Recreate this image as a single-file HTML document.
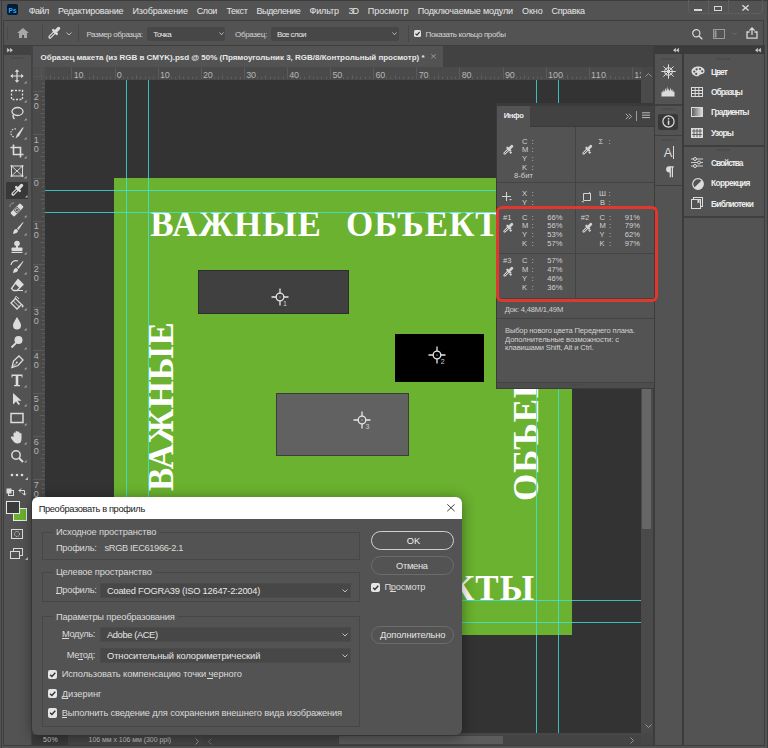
<!DOCTYPE html>
<html><head><meta charset="utf-8">
<style>
*{margin:0;padding:0;box-sizing:border-box}
html,body{width:768px;height:748px;overflow:hidden;background:#3a3a3a;font-family:"Liberation Sans",sans-serif;position:relative}
.a{position:absolute}
.t{position:absolute;white-space:nowrap;line-height:1}
svg{overflow:visible}
</style></head><body>
<div class="a" style="left:0px;top:0px;width:768px;height:748px;background:#535353;"></div>
<div class="a" style="left:0px;top:0px;width:768px;height:1px;background:#3d3d3d;"></div>
<div class="a" style="left:1px;top:0px;width:1px;height:748px;background:#3d3d3d;"></div>
<div class="a" style="left:767px;top:0px;width:1px;height:748px;background:#3d3d3d;"></div>
<div class="a" style="left:3px;top:45px;width:762px;height:701px;background:#3e3e3e;"></div>
<div class="a" style="left:3px;top:20px;width:761px;height:26px;background:#3e3e3e;"></div>
<div class="a" style="left:4px;top:21px;width:759px;height:24px;background:#535353;"></div>
<div class="a" style="left:4px;top:46px;width:27px;height:699px;background:#535353;"></div>
<div class="a" style="left:4px;top:46px;width:27px;height:9px;background:#424242;"></div>
<div class="a" style="left:31px;top:46px;width:622.5px;height:21px;background:#424242;"></div>
<div class="a" style="left:32px;top:46px;width:411px;height:21px;background:#535353;"></div>
<div class="a" style="left:32px;top:67px;width:609px;height:13px;background:#4a4a4a;"></div>
<div class="a" style="left:32px;top:67px;width:13px;height:666px;background:#4a4a4a;"></div>
<div class="a" style="left:45px;top:80px;width:596px;height:653px;background:#333333;"></div>
<div class="a" style="left:641px;top:67px;width:13px;height:666px;background:#4a4a4a;"></div>
<div class="a" style="left:32px;top:733px;width:622px;height:12px;background:#474747;"></div>
<div class="a" style="left:655px;top:46px;width:109px;height:8px;background:#3b3b3b;"></div>
<div class="a" style="left:655px;top:54px;width:27px;height:691px;background:#535353;"></div>
<div class="a" style="left:684px;top:54px;width:80px;height:691px;background:#535353;"></div>
<div class="a" style="left:7px;top:4px;width:11px;height:11px;background:#001e36;border-radius:2px"></div>
<div class="t" style="left:8.60px;top:8.00px;font-size:6.5px;color:#31a8ff;font-weight:bold;font-family:'Liberation Sans',sans-serif;">Ps</div>
<div class="t" style="left:28.70px;top:7.00px;font-size:9px;color:#e6e6e6;font-weight:normal;font-family:'Liberation Sans',sans-serif;letter-spacing:-0.513px;">Файл</div>
<div class="t" style="left:58.00px;top:7.00px;font-size:9px;color:#e6e6e6;font-weight:normal;font-family:'Liberation Sans',sans-serif;letter-spacing:-0.229px;">Редактирование</div>
<div class="t" style="left:132.50px;top:7.00px;font-size:9px;color:#e6e6e6;font-weight:normal;font-family:'Liberation Sans',sans-serif;letter-spacing:-0.120px;">Изображение</div>
<div class="t" style="left:196.80px;top:7.00px;font-size:9px;color:#e6e6e6;font-weight:normal;font-family:'Liberation Sans',sans-serif;letter-spacing:-0.457px;">Слои</div>
<div class="t" style="left:226.40px;top:7.00px;font-size:9px;color:#e6e6e6;font-weight:normal;font-family:'Liberation Sans',sans-serif;letter-spacing:-0.270px;">Текст</div>
<div class="t" style="left:256.40px;top:7.00px;font-size:9px;color:#e6e6e6;font-weight:normal;font-family:'Liberation Sans',sans-serif;letter-spacing:-0.425px;">Выделение</div>
<div class="t" style="left:309.50px;top:7.00px;font-size:9px;color:#e6e6e6;font-weight:normal;font-family:'Liberation Sans',sans-serif;letter-spacing:-0.148px;">Фильтр</div>
<div class="t" style="left:348.50px;top:7.00px;font-size:9px;color:#e6e6e6;font-weight:normal;font-family:'Liberation Sans',sans-serif;letter-spacing:-1.020px;">3D</div>
<div class="t" style="left:367.80px;top:7.00px;font-size:9px;color:#e6e6e6;font-weight:normal;font-family:'Liberation Sans',sans-serif;letter-spacing:-0.069px;">Просмотр</div>
<div class="t" style="left:417.80px;top:7.00px;font-size:9px;color:#e6e6e6;font-weight:normal;font-family:'Liberation Sans',sans-serif;letter-spacing:-0.153px;">Подключаемые модули</div>
<div class="t" style="left:521.90px;top:7.00px;font-size:9px;color:#e6e6e6;font-weight:normal;font-family:'Liberation Sans',sans-serif;letter-spacing:-0.008px;">Окно</div>
<div class="t" style="left:551.60px;top:7.00px;font-size:9px;color:#e6e6e6;font-weight:normal;font-family:'Liberation Sans',sans-serif;letter-spacing:-0.321px;">Справка</div>
<div class="a" style="left:688px;top:-2px;width:75px;height:16px;border:1px solid #5e5e5e;border-radius:0 0 4px 4px"></div>
<div class="a" style="left:708px;top:0px;width:1px;height:14px;background:#5e5e5e;"></div>
<div class="a" style="left:728px;top:0px;width:1px;height:14px;background:#5e5e5e;"></div>
<div class="a" style="left:693.8px;top:9.2px;width:8px;height:1.8px;background:#d8d8d8;"></div>
<div class="a" style="left:714.4px;top:5.7px;width:7.6px;height:5px;border:1.5px solid #d8d8d8"></div>
<svg class="a" style="left:741.8px;top:4.5px;" width="7" height="5.8" viewBox="0 0 7 5.8"><path d="M0.4 0.3L6.6 5.5M6.6 0.3L0.4 5.5" stroke="#d8d8d8" stroke-width="1.45"/></svg>
<div class="a" style="left:7px;top:26px;width:1px;height:14px;background:#4a4a4a;"></div>
<svg class="a" style="left:17px;top:28px;" width="12" height="10" viewBox="0 0 12 10"><path d="M6 0L0 5H2V10H5V7H7V10H10V5H12Z" fill="#a6a6a6"/></svg>
<div class="a" style="left:42px;top:25px;width:1px;height:16px;background:#474747;"></div>
<svg class="a" style="left:48px;top:27px;" width="12" height="12" viewBox="0 0 12 12"><g transform="scale(1.0000)"><path d="M8.2 3.8L10.6 1.4" stroke="#dcdcdc" stroke-width="3.3" stroke-linecap="round"/><path d="M5.2 3.2L8.8 6.8" stroke="#dcdcdc" stroke-width="2.5" stroke-linecap="round"/><path d="M6.6 5.4L2.0 10.0" stroke="#dcdcdc" stroke-width="3.2" stroke-linecap="round"/><path d="M5.6 6.4L2.3 9.7" stroke="#535353" stroke-width="1.1" stroke-linecap="round"/></g></svg>
<svg class="a" style="left:66px;top:32px;" width="6" height="4" viewBox="0 0 6 4"><path d="M0.5 0.5L3 3L5.5 0.5" fill="none" stroke="#bdbdbd" stroke-width="1"/></svg>
<div class="a" style="left:77.5px;top:25px;width:1px;height:17px;background:#474747;"></div>
<div class="t" style="left:86.40px;top:31.00px;font-size:8px;color:#d4d4d4;font-weight:normal;font-family:'Liberation Sans',sans-serif;letter-spacing:-0.420px;">Размер образца:</div>
<div class="a" style="left:147px;top:26.5px;width:78px;height:14.5px;background:#474747;border-radius:2px"></div>
<div class="t" style="left:153.30px;top:31.00px;font-size:8px;color:#e8e8e8;font-weight:normal;font-family:'Liberation Sans',sans-serif;letter-spacing:-0.635px;">Точка</div>
<svg class="a" style="left:219px;top:32px;" width="5" height="4" viewBox="0 0 5 4"><path d="M0.5 0.5L2.5 2.7L4.5 0.5" fill="none" stroke="#c8c8c8" stroke-width="0.9"/></svg>
<div class="t" style="left:235.00px;top:31.00px;font-size:8px;color:#d4d4d4;font-weight:normal;font-family:'Liberation Sans',sans-serif;letter-spacing:-0.334px;">Образец:</div>
<div class="a" style="left:270.7px;top:26.5px;width:128.5px;height:14.5px;background:#474747;border-radius:2px"></div>
<div class="t" style="left:276.90px;top:31.00px;font-size:8px;color:#e8e8e8;font-weight:normal;font-family:'Liberation Sans',sans-serif;letter-spacing:-0.569px;">Все слои</div>
<svg class="a" style="left:392.3px;top:32px;" width="5" height="4" viewBox="0 0 5 4"><path d="M0.5 0.5L2.5 2.7L4.5 0.5" fill="none" stroke="#c8c8c8" stroke-width="0.9"/></svg>
<div class="a" style="left:407.5px;top:25px;width:1px;height:17px;background:#474747;"></div>
<div class="a" style="left:414px;top:29.7px;width:7px;height:7px;background:#e0e0e0;border-radius:1.5px"></div>
<svg class="a" style="left:414px;top:29.7px;" width="7" height="7" viewBox="0 0 7 7"><path d="M1.5 3.6L3 5.1L5.6 1.8" fill="none" stroke="#333" stroke-width="1.2"/></svg>
<div class="t" style="left:425.50px;top:31.00px;font-size:8px;color:#d4d4d4;font-weight:normal;font-family:'Liberation Sans',sans-serif;letter-spacing:-0.357px;">Показать кольцо пробы</div>
<svg class="a" style="left:692px;top:29px;" width="11" height="11" viewBox="0 0 11 11"><circle cx="4.3" cy="4.3" r="3.6" fill="none" stroke="#d8d8d8" stroke-width="1.2"/><path d="M7 7L10.3 10.3" stroke="#d8d8d8" stroke-width="1.4"/></svg>
<svg class="a" style="left:713px;top:29px;" width="12" height="10" viewBox="0 0 12 10"><rect x="0.5" y="0.5" width="11" height="9" fill="none" stroke="#9a9a9a"/><rect x="1.5" y="1.5" width="2" height="7" fill="#9a9a9a"/></svg>
<svg class="a" style="left:732px;top:32px;" width="5" height="4" viewBox="0 0 5 4"><path d="M0.5 0.5L2.5 2.7L4.5 0.5" fill="none" stroke="#6e6e6e" stroke-width="0.9"/></svg>
<svg class="a" style="left:746px;top:27px;" width="12" height="12" viewBox="0 0 12 12"><path d="M6 1V8M3.3 3.6L6 0.9L8.7 3.6M3.5 5H1V11.2H11V5H8.5" fill="none" stroke="#d8d8d8" stroke-width="1.3"/></svg>
<div class="t" style="left:40.60px;top:54.00px;font-size:8px;color:#e8e8e8;font-weight:bold;font-family:'Liberation Sans',sans-serif;letter-spacing:-0.010px;">Образец макета (из RGB в CMYK).psd @ 50% (Прямоугольник 3, RGB/8/Контрольный просмотр) *</div>
<svg class="a" style="left:431px;top:54.3px;" width="5" height="4.6" viewBox="0 0 5 4.6"><path d="M0.3 0.3L4.7 4.3M4.7 0.3L0.3 4.3" stroke="#a8a8a8" stroke-width="0.8"/></svg>
<svg class="a" style="left:32px;top:67px;overflow:hidden" width="609" height="13" viewBox="0 0 609 13"><line x1="14.50" y1="9.7" x2="14.50" y2="12" stroke="#5f5f5f" stroke-width="1"/><line x1="18.50" y1="8.2" x2="18.50" y2="12" stroke="#5f5f5f" stroke-width="1"/><line x1="22.50" y1="9.7" x2="22.50" y2="12" stroke="#5f5f5f" stroke-width="1"/><line x1="26.50" y1="9.7" x2="26.50" y2="12" stroke="#5f5f5f" stroke-width="1"/><line x1="31.50" y1="9.7" x2="31.50" y2="12" stroke="#5f5f5f" stroke-width="1"/><line x1="35.50" y1="9.7" x2="35.50" y2="12" stroke="#5f5f5f" stroke-width="1"/><line x1="39.50" y1="0.3" x2="39.50" y2="12" stroke="#5a5a5a" stroke-width="1"/><line x1="44.50" y1="9.7" x2="44.50" y2="12" stroke="#5f5f5f" stroke-width="1"/><line x1="48.50" y1="9.7" x2="48.50" y2="12" stroke="#5f5f5f" stroke-width="1"/><line x1="52.50" y1="9.7" x2="52.50" y2="12" stroke="#5f5f5f" stroke-width="1"/><line x1="57.50" y1="9.7" x2="57.50" y2="12" stroke="#5f5f5f" stroke-width="1"/><line x1="61.50" y1="8.2" x2="61.50" y2="12" stroke="#5f5f5f" stroke-width="1"/><line x1="65.50" y1="9.7" x2="65.50" y2="12" stroke="#5f5f5f" stroke-width="1"/><line x1="70.50" y1="9.7" x2="70.50" y2="12" stroke="#5f5f5f" stroke-width="1"/><line x1="74.50" y1="9.7" x2="74.50" y2="12" stroke="#5f5f5f" stroke-width="1"/><line x1="78.50" y1="9.7" x2="78.50" y2="12" stroke="#5f5f5f" stroke-width="1"/><line x1="83.50" y1="0.3" x2="83.50" y2="12" stroke="#5a5a5a" stroke-width="1"/><line x1="87.50" y1="9.7" x2="87.50" y2="12" stroke="#5f5f5f" stroke-width="1"/><line x1="91.50" y1="9.7" x2="91.50" y2="12" stroke="#5f5f5f" stroke-width="1"/><line x1="95.50" y1="9.7" x2="95.50" y2="12" stroke="#5f5f5f" stroke-width="1"/><line x1="100.50" y1="9.7" x2="100.50" y2="12" stroke="#5f5f5f" stroke-width="1"/><line x1="104.50" y1="8.2" x2="104.50" y2="12" stroke="#5f5f5f" stroke-width="1"/><line x1="108.50" y1="9.7" x2="108.50" y2="12" stroke="#5f5f5f" stroke-width="1"/><line x1="113.50" y1="9.7" x2="113.50" y2="12" stroke="#5f5f5f" stroke-width="1"/><line x1="117.50" y1="9.7" x2="117.50" y2="12" stroke="#5f5f5f" stroke-width="1"/><line x1="121.50" y1="9.7" x2="121.50" y2="12" stroke="#5f5f5f" stroke-width="1"/><line x1="126.50" y1="0.3" x2="126.50" y2="12" stroke="#5a5a5a" stroke-width="1"/><line x1="130.50" y1="9.7" x2="130.50" y2="12" stroke="#5f5f5f" stroke-width="1"/><line x1="134.50" y1="9.7" x2="134.50" y2="12" stroke="#5f5f5f" stroke-width="1"/><line x1="139.50" y1="9.7" x2="139.50" y2="12" stroke="#5f5f5f" stroke-width="1"/><line x1="143.50" y1="9.7" x2="143.50" y2="12" stroke="#5f5f5f" stroke-width="1"/><line x1="147.50" y1="8.2" x2="147.50" y2="12" stroke="#5f5f5f" stroke-width="1"/><line x1="151.50" y1="9.7" x2="151.50" y2="12" stroke="#5f5f5f" stroke-width="1"/><line x1="156.50" y1="9.7" x2="156.50" y2="12" stroke="#5f5f5f" stroke-width="1"/><line x1="160.50" y1="9.7" x2="160.50" y2="12" stroke="#5f5f5f" stroke-width="1"/><line x1="164.50" y1="9.7" x2="164.50" y2="12" stroke="#5f5f5f" stroke-width="1"/><line x1="169.50" y1="0.3" x2="169.50" y2="12" stroke="#5a5a5a" stroke-width="1"/><line x1="173.50" y1="9.7" x2="173.50" y2="12" stroke="#5f5f5f" stroke-width="1"/><line x1="177.50" y1="9.7" x2="177.50" y2="12" stroke="#5f5f5f" stroke-width="1"/><line x1="182.50" y1="9.7" x2="182.50" y2="12" stroke="#5f5f5f" stroke-width="1"/><line x1="186.50" y1="9.7" x2="186.50" y2="12" stroke="#5f5f5f" stroke-width="1"/><line x1="190.50" y1="8.2" x2="190.50" y2="12" stroke="#5f5f5f" stroke-width="1"/><line x1="195.50" y1="9.7" x2="195.50" y2="12" stroke="#5f5f5f" stroke-width="1"/><line x1="199.50" y1="9.7" x2="199.50" y2="12" stroke="#5f5f5f" stroke-width="1"/><line x1="203.50" y1="9.7" x2="203.50" y2="12" stroke="#5f5f5f" stroke-width="1"/><line x1="208.50" y1="9.7" x2="208.50" y2="12" stroke="#5f5f5f" stroke-width="1"/><line x1="212.50" y1="0.3" x2="212.50" y2="12" stroke="#5a5a5a" stroke-width="1"/><line x1="216.50" y1="9.7" x2="216.50" y2="12" stroke="#5f5f5f" stroke-width="1"/><line x1="220.50" y1="9.7" x2="220.50" y2="12" stroke="#5f5f5f" stroke-width="1"/><line x1="225.50" y1="9.7" x2="225.50" y2="12" stroke="#5f5f5f" stroke-width="1"/><line x1="229.50" y1="9.7" x2="229.50" y2="12" stroke="#5f5f5f" stroke-width="1"/><line x1="233.50" y1="8.2" x2="233.50" y2="12" stroke="#5f5f5f" stroke-width="1"/><line x1="238.50" y1="9.7" x2="238.50" y2="12" stroke="#5f5f5f" stroke-width="1"/><line x1="242.50" y1="9.7" x2="242.50" y2="12" stroke="#5f5f5f" stroke-width="1"/><line x1="246.50" y1="9.7" x2="246.50" y2="12" stroke="#5f5f5f" stroke-width="1"/><line x1="251.50" y1="9.7" x2="251.50" y2="12" stroke="#5f5f5f" stroke-width="1"/><line x1="255.50" y1="0.3" x2="255.50" y2="12" stroke="#5a5a5a" stroke-width="1"/><line x1="259.50" y1="9.7" x2="259.50" y2="12" stroke="#5f5f5f" stroke-width="1"/><line x1="264.50" y1="9.7" x2="264.50" y2="12" stroke="#5f5f5f" stroke-width="1"/><line x1="268.50" y1="9.7" x2="268.50" y2="12" stroke="#5f5f5f" stroke-width="1"/><line x1="272.50" y1="9.7" x2="272.50" y2="12" stroke="#5f5f5f" stroke-width="1"/><line x1="277.50" y1="8.2" x2="277.50" y2="12" stroke="#5f5f5f" stroke-width="1"/><line x1="281.50" y1="9.7" x2="281.50" y2="12" stroke="#5f5f5f" stroke-width="1"/><line x1="285.50" y1="9.7" x2="285.50" y2="12" stroke="#5f5f5f" stroke-width="1"/><line x1="289.50" y1="9.7" x2="289.50" y2="12" stroke="#5f5f5f" stroke-width="1"/><line x1="294.50" y1="9.7" x2="294.50" y2="12" stroke="#5f5f5f" stroke-width="1"/><line x1="298.50" y1="0.3" x2="298.50" y2="12" stroke="#5a5a5a" stroke-width="1"/><line x1="302.50" y1="9.7" x2="302.50" y2="12" stroke="#5f5f5f" stroke-width="1"/><line x1="307.50" y1="9.7" x2="307.50" y2="12" stroke="#5f5f5f" stroke-width="1"/><line x1="311.50" y1="9.7" x2="311.50" y2="12" stroke="#5f5f5f" stroke-width="1"/><line x1="315.50" y1="9.7" x2="315.50" y2="12" stroke="#5f5f5f" stroke-width="1"/><line x1="320.50" y1="8.2" x2="320.50" y2="12" stroke="#5f5f5f" stroke-width="1"/><line x1="324.50" y1="9.7" x2="324.50" y2="12" stroke="#5f5f5f" stroke-width="1"/><line x1="328.50" y1="9.7" x2="328.50" y2="12" stroke="#5f5f5f" stroke-width="1"/><line x1="333.50" y1="9.7" x2="333.50" y2="12" stroke="#5f5f5f" stroke-width="1"/><line x1="337.50" y1="9.7" x2="337.50" y2="12" stroke="#5f5f5f" stroke-width="1"/><line x1="341.50" y1="0.3" x2="341.50" y2="12" stroke="#5a5a5a" stroke-width="1"/><line x1="346.50" y1="9.7" x2="346.50" y2="12" stroke="#5f5f5f" stroke-width="1"/><line x1="350.50" y1="9.7" x2="350.50" y2="12" stroke="#5f5f5f" stroke-width="1"/><line x1="354.50" y1="9.7" x2="354.50" y2="12" stroke="#5f5f5f" stroke-width="1"/><line x1="358.50" y1="9.7" x2="358.50" y2="12" stroke="#5f5f5f" stroke-width="1"/><line x1="363.50" y1="8.2" x2="363.50" y2="12" stroke="#5f5f5f" stroke-width="1"/><line x1="367.50" y1="9.7" x2="367.50" y2="12" stroke="#5f5f5f" stroke-width="1"/><line x1="371.50" y1="9.7" x2="371.50" y2="12" stroke="#5f5f5f" stroke-width="1"/><line x1="376.50" y1="9.7" x2="376.50" y2="12" stroke="#5f5f5f" stroke-width="1"/><line x1="380.50" y1="9.7" x2="380.50" y2="12" stroke="#5f5f5f" stroke-width="1"/><line x1="384.50" y1="0.3" x2="384.50" y2="12" stroke="#5a5a5a" stroke-width="1"/><line x1="389.50" y1="9.7" x2="389.50" y2="12" stroke="#5f5f5f" stroke-width="1"/><line x1="393.50" y1="9.7" x2="393.50" y2="12" stroke="#5f5f5f" stroke-width="1"/><line x1="397.50" y1="9.7" x2="397.50" y2="12" stroke="#5f5f5f" stroke-width="1"/><line x1="402.50" y1="9.7" x2="402.50" y2="12" stroke="#5f5f5f" stroke-width="1"/><line x1="406.50" y1="8.2" x2="406.50" y2="12" stroke="#5f5f5f" stroke-width="1"/><line x1="410.50" y1="9.7" x2="410.50" y2="12" stroke="#5f5f5f" stroke-width="1"/><line x1="415.50" y1="9.7" x2="415.50" y2="12" stroke="#5f5f5f" stroke-width="1"/><line x1="419.50" y1="9.7" x2="419.50" y2="12" stroke="#5f5f5f" stroke-width="1"/><line x1="423.50" y1="9.7" x2="423.50" y2="12" stroke="#5f5f5f" stroke-width="1"/><line x1="427.50" y1="0.3" x2="427.50" y2="12" stroke="#5a5a5a" stroke-width="1"/><line x1="432.50" y1="9.7" x2="432.50" y2="12" stroke="#5f5f5f" stroke-width="1"/><line x1="436.50" y1="9.7" x2="436.50" y2="12" stroke="#5f5f5f" stroke-width="1"/><line x1="440.50" y1="9.7" x2="440.50" y2="12" stroke="#5f5f5f" stroke-width="1"/><line x1="445.50" y1="9.7" x2="445.50" y2="12" stroke="#5f5f5f" stroke-width="1"/><line x1="449.50" y1="8.2" x2="449.50" y2="12" stroke="#5f5f5f" stroke-width="1"/><line x1="453.50" y1="9.7" x2="453.50" y2="12" stroke="#5f5f5f" stroke-width="1"/><line x1="458.50" y1="9.7" x2="458.50" y2="12" stroke="#5f5f5f" stroke-width="1"/><line x1="462.50" y1="9.7" x2="462.50" y2="12" stroke="#5f5f5f" stroke-width="1"/><line x1="466.50" y1="9.7" x2="466.50" y2="12" stroke="#5f5f5f" stroke-width="1"/><line x1="471.50" y1="0.3" x2="471.50" y2="12" stroke="#5a5a5a" stroke-width="1"/><line x1="475.50" y1="9.7" x2="475.50" y2="12" stroke="#5f5f5f" stroke-width="1"/><line x1="479.50" y1="9.7" x2="479.50" y2="12" stroke="#5f5f5f" stroke-width="1"/><line x1="484.50" y1="9.7" x2="484.50" y2="12" stroke="#5f5f5f" stroke-width="1"/><line x1="488.50" y1="9.7" x2="488.50" y2="12" stroke="#5f5f5f" stroke-width="1"/><line x1="492.50" y1="8.2" x2="492.50" y2="12" stroke="#5f5f5f" stroke-width="1"/><line x1="496.50" y1="9.7" x2="496.50" y2="12" stroke="#5f5f5f" stroke-width="1"/><line x1="501.50" y1="9.7" x2="501.50" y2="12" stroke="#5f5f5f" stroke-width="1"/><line x1="505.50" y1="9.7" x2="505.50" y2="12" stroke="#5f5f5f" stroke-width="1"/><line x1="509.50" y1="9.7" x2="509.50" y2="12" stroke="#5f5f5f" stroke-width="1"/><line x1="514.50" y1="0.3" x2="514.50" y2="12" stroke="#5a5a5a" stroke-width="1"/><line x1="518.50" y1="9.7" x2="518.50" y2="12" stroke="#5f5f5f" stroke-width="1"/><line x1="522.50" y1="9.7" x2="522.50" y2="12" stroke="#5f5f5f" stroke-width="1"/><line x1="527.50" y1="9.7" x2="527.50" y2="12" stroke="#5f5f5f" stroke-width="1"/><line x1="531.50" y1="9.7" x2="531.50" y2="12" stroke="#5f5f5f" stroke-width="1"/><line x1="535.50" y1="8.2" x2="535.50" y2="12" stroke="#5f5f5f" stroke-width="1"/><line x1="540.50" y1="9.7" x2="540.50" y2="12" stroke="#5f5f5f" stroke-width="1"/><line x1="544.50" y1="9.7" x2="544.50" y2="12" stroke="#5f5f5f" stroke-width="1"/><line x1="548.50" y1="9.7" x2="548.50" y2="12" stroke="#5f5f5f" stroke-width="1"/><line x1="553.50" y1="9.7" x2="553.50" y2="12" stroke="#5f5f5f" stroke-width="1"/><line x1="557.50" y1="0.3" x2="557.50" y2="12" stroke="#5a5a5a" stroke-width="1"/><line x1="561.50" y1="9.7" x2="561.50" y2="12" stroke="#5f5f5f" stroke-width="1"/><line x1="565.50" y1="9.7" x2="565.50" y2="12" stroke="#5f5f5f" stroke-width="1"/><line x1="570.50" y1="9.7" x2="570.50" y2="12" stroke="#5f5f5f" stroke-width="1"/><line x1="574.50" y1="9.7" x2="574.50" y2="12" stroke="#5f5f5f" stroke-width="1"/><line x1="578.50" y1="8.2" x2="578.50" y2="12" stroke="#5f5f5f" stroke-width="1"/><line x1="583.50" y1="9.7" x2="583.50" y2="12" stroke="#5f5f5f" stroke-width="1"/><line x1="587.50" y1="9.7" x2="587.50" y2="12" stroke="#5f5f5f" stroke-width="1"/><line x1="591.50" y1="9.7" x2="591.50" y2="12" stroke="#5f5f5f" stroke-width="1"/><line x1="596.50" y1="9.7" x2="596.50" y2="12" stroke="#5f5f5f" stroke-width="1"/><line x1="600.50" y1="0.3" x2="600.50" y2="12" stroke="#5a5a5a" stroke-width="1"/><line x1="604.50" y1="9.7" x2="604.50" y2="12" stroke="#5f5f5f" stroke-width="1"/></svg>
<div class="a" style="left:0;top:0;width:641px;height:80px;overflow:hidden">
<div class="t" style="left:73.68px;top:71.00px;font-size:9px;color:#b4b4b4;font-weight:normal;font-family:'Liberation Sans',sans-serif;letter-spacing:-0.190px;">10</div>
<div class="t" style="left:116.80px;top:71.00px;font-size:9px;color:#b4b4b4;font-weight:normal;font-family:'Liberation Sans',sans-serif;">0</div>
<div class="t" style="left:159.92px;top:71.00px;font-size:9px;color:#b4b4b4;font-weight:normal;font-family:'Liberation Sans',sans-serif;letter-spacing:-0.190px;">10</div>
<div class="t" style="left:203.04px;top:71.00px;font-size:9px;color:#b4b4b4;font-weight:normal;font-family:'Liberation Sans',sans-serif;letter-spacing:-0.190px;">20</div>
<div class="t" style="left:246.16px;top:71.00px;font-size:9px;color:#b4b4b4;font-weight:normal;font-family:'Liberation Sans',sans-serif;letter-spacing:-0.190px;">30</div>
<div class="t" style="left:289.28px;top:71.00px;font-size:9px;color:#b4b4b4;font-weight:normal;font-family:'Liberation Sans',sans-serif;letter-spacing:-0.190px;">40</div>
<div class="t" style="left:332.40px;top:71.00px;font-size:9px;color:#b4b4b4;font-weight:normal;font-family:'Liberation Sans',sans-serif;letter-spacing:-0.190px;">50</div>
<div class="t" style="left:375.52px;top:71.00px;font-size:9px;color:#b4b4b4;font-weight:normal;font-family:'Liberation Sans',sans-serif;letter-spacing:-0.190px;">60</div>
<div class="t" style="left:418.64px;top:71.00px;font-size:9px;color:#b4b4b4;font-weight:normal;font-family:'Liberation Sans',sans-serif;letter-spacing:-0.190px;">70</div>
<div class="t" style="left:461.76px;top:71.00px;font-size:9px;color:#b4b4b4;font-weight:normal;font-family:'Liberation Sans',sans-serif;letter-spacing:-0.190px;">80</div>
<div class="t" style="left:504.88px;top:71.00px;font-size:9px;color:#b4b4b4;font-weight:normal;font-family:'Liberation Sans',sans-serif;letter-spacing:-0.190px;">90</div>
<div class="t" style="left:548.00px;top:71.00px;font-size:9px;color:#b4b4b4;font-weight:normal;font-family:'Liberation Sans',sans-serif;letter-spacing:-0.015px;">100</div>
<div class="t" style="left:591.12px;top:71.00px;font-size:9px;color:#b4b4b4;font-weight:normal;font-family:'Liberation Sans',sans-serif;letter-spacing:0.322px;">110</div>
<div class="t" style="left:634.24px;top:71.00px;font-size:9px;color:#b4b4b4;font-weight:normal;font-family:'Liberation Sans',sans-serif;letter-spacing:-0.015px;">120</div>
</div>
<svg class="a" style="left:32px;top:67px;overflow:hidden" width="13" height="666" viewBox="0 0 13 666"><line x1="10" y1="16.50" x2="12.5" y2="16.50" stroke="#5f5f5f" stroke-width="1"/><line x1="10" y1="20.50" x2="12.5" y2="20.50" stroke="#5f5f5f" stroke-width="1"/><line x1="1" y1="24.50" x2="12.5" y2="24.50" stroke="#5a5a5a" stroke-width="1"/><line x1="10" y1="29.50" x2="12.5" y2="29.50" stroke="#5f5f5f" stroke-width="1"/><line x1="10" y1="33.50" x2="12.5" y2="33.50" stroke="#5f5f5f" stroke-width="1"/><line x1="10" y1="37.50" x2="12.5" y2="37.50" stroke="#5f5f5f" stroke-width="1"/><line x1="10" y1="42.50" x2="12.5" y2="42.50" stroke="#5f5f5f" stroke-width="1"/><line x1="8.5" y1="46.50" x2="12.5" y2="46.50" stroke="#5f5f5f" stroke-width="1"/><line x1="10" y1="50.50" x2="12.5" y2="50.50" stroke="#5f5f5f" stroke-width="1"/><line x1="10" y1="55.50" x2="12.5" y2="55.50" stroke="#5f5f5f" stroke-width="1"/><line x1="10" y1="59.50" x2="12.5" y2="59.50" stroke="#5f5f5f" stroke-width="1"/><line x1="10" y1="63.50" x2="12.5" y2="63.50" stroke="#5f5f5f" stroke-width="1"/><line x1="1" y1="67.50" x2="12.5" y2="67.50" stroke="#5a5a5a" stroke-width="1"/><line x1="10" y1="72.50" x2="12.5" y2="72.50" stroke="#5f5f5f" stroke-width="1"/><line x1="10" y1="76.50" x2="12.5" y2="76.50" stroke="#5f5f5f" stroke-width="1"/><line x1="10" y1="80.50" x2="12.5" y2="80.50" stroke="#5f5f5f" stroke-width="1"/><line x1="10" y1="85.50" x2="12.5" y2="85.50" stroke="#5f5f5f" stroke-width="1"/><line x1="8.5" y1="89.50" x2="12.5" y2="89.50" stroke="#5f5f5f" stroke-width="1"/><line x1="10" y1="93.50" x2="12.5" y2="93.50" stroke="#5f5f5f" stroke-width="1"/><line x1="10" y1="98.50" x2="12.5" y2="98.50" stroke="#5f5f5f" stroke-width="1"/><line x1="10" y1="102.50" x2="12.5" y2="102.50" stroke="#5f5f5f" stroke-width="1"/><line x1="10" y1="106.50" x2="12.5" y2="106.50" stroke="#5f5f5f" stroke-width="1"/><line x1="1" y1="111.50" x2="12.5" y2="111.50" stroke="#5a5a5a" stroke-width="1"/><line x1="10" y1="115.50" x2="12.5" y2="115.50" stroke="#5f5f5f" stroke-width="1"/><line x1="10" y1="119.50" x2="12.5" y2="119.50" stroke="#5f5f5f" stroke-width="1"/><line x1="10" y1="124.50" x2="12.5" y2="124.50" stroke="#5f5f5f" stroke-width="1"/><line x1="10" y1="128.50" x2="12.5" y2="128.50" stroke="#5f5f5f" stroke-width="1"/><line x1="8.5" y1="132.50" x2="12.5" y2="132.50" stroke="#5f5f5f" stroke-width="1"/><line x1="10" y1="136.50" x2="12.5" y2="136.50" stroke="#5f5f5f" stroke-width="1"/><line x1="10" y1="141.50" x2="12.5" y2="141.50" stroke="#5f5f5f" stroke-width="1"/><line x1="10" y1="145.50" x2="12.5" y2="145.50" stroke="#5f5f5f" stroke-width="1"/><line x1="10" y1="149.50" x2="12.5" y2="149.50" stroke="#5f5f5f" stroke-width="1"/><line x1="1" y1="154.50" x2="12.5" y2="154.50" stroke="#5a5a5a" stroke-width="1"/><line x1="10" y1="158.50" x2="12.5" y2="158.50" stroke="#5f5f5f" stroke-width="1"/><line x1="10" y1="162.50" x2="12.5" y2="162.50" stroke="#5f5f5f" stroke-width="1"/><line x1="10" y1="167.50" x2="12.5" y2="167.50" stroke="#5f5f5f" stroke-width="1"/><line x1="10" y1="171.50" x2="12.5" y2="171.50" stroke="#5f5f5f" stroke-width="1"/><line x1="8.5" y1="175.50" x2="12.5" y2="175.50" stroke="#5f5f5f" stroke-width="1"/><line x1="10" y1="180.50" x2="12.5" y2="180.50" stroke="#5f5f5f" stroke-width="1"/><line x1="10" y1="184.50" x2="12.5" y2="184.50" stroke="#5f5f5f" stroke-width="1"/><line x1="10" y1="188.50" x2="12.5" y2="188.50" stroke="#5f5f5f" stroke-width="1"/><line x1="10" y1="193.50" x2="12.5" y2="193.50" stroke="#5f5f5f" stroke-width="1"/><line x1="1" y1="197.50" x2="12.5" y2="197.50" stroke="#5a5a5a" stroke-width="1"/><line x1="10" y1="201.50" x2="12.5" y2="201.50" stroke="#5f5f5f" stroke-width="1"/><line x1="10" y1="205.50" x2="12.5" y2="205.50" stroke="#5f5f5f" stroke-width="1"/><line x1="10" y1="210.50" x2="12.5" y2="210.50" stroke="#5f5f5f" stroke-width="1"/><line x1="10" y1="214.50" x2="12.5" y2="214.50" stroke="#5f5f5f" stroke-width="1"/><line x1="8.5" y1="218.50" x2="12.5" y2="218.50" stroke="#5f5f5f" stroke-width="1"/><line x1="10" y1="223.50" x2="12.5" y2="223.50" stroke="#5f5f5f" stroke-width="1"/><line x1="10" y1="227.50" x2="12.5" y2="227.50" stroke="#5f5f5f" stroke-width="1"/><line x1="10" y1="231.50" x2="12.5" y2="231.50" stroke="#5f5f5f" stroke-width="1"/><line x1="10" y1="236.50" x2="12.5" y2="236.50" stroke="#5f5f5f" stroke-width="1"/><line x1="1" y1="240.50" x2="12.5" y2="240.50" stroke="#5a5a5a" stroke-width="1"/><line x1="10" y1="244.50" x2="12.5" y2="244.50" stroke="#5f5f5f" stroke-width="1"/><line x1="10" y1="249.50" x2="12.5" y2="249.50" stroke="#5f5f5f" stroke-width="1"/><line x1="10" y1="253.50" x2="12.5" y2="253.50" stroke="#5f5f5f" stroke-width="1"/><line x1="10" y1="257.50" x2="12.5" y2="257.50" stroke="#5f5f5f" stroke-width="1"/><line x1="8.5" y1="262.50" x2="12.5" y2="262.50" stroke="#5f5f5f" stroke-width="1"/><line x1="10" y1="266.50" x2="12.5" y2="266.50" stroke="#5f5f5f" stroke-width="1"/><line x1="10" y1="270.50" x2="12.5" y2="270.50" stroke="#5f5f5f" stroke-width="1"/><line x1="10" y1="274.50" x2="12.5" y2="274.50" stroke="#5f5f5f" stroke-width="1"/><line x1="10" y1="279.50" x2="12.5" y2="279.50" stroke="#5f5f5f" stroke-width="1"/><line x1="1" y1="283.50" x2="12.5" y2="283.50" stroke="#5a5a5a" stroke-width="1"/><line x1="10" y1="287.50" x2="12.5" y2="287.50" stroke="#5f5f5f" stroke-width="1"/><line x1="10" y1="292.50" x2="12.5" y2="292.50" stroke="#5f5f5f" stroke-width="1"/><line x1="10" y1="296.50" x2="12.5" y2="296.50" stroke="#5f5f5f" stroke-width="1"/><line x1="10" y1="300.50" x2="12.5" y2="300.50" stroke="#5f5f5f" stroke-width="1"/><line x1="8.5" y1="305.50" x2="12.5" y2="305.50" stroke="#5f5f5f" stroke-width="1"/><line x1="10" y1="309.50" x2="12.5" y2="309.50" stroke="#5f5f5f" stroke-width="1"/><line x1="10" y1="313.50" x2="12.5" y2="313.50" stroke="#5f5f5f" stroke-width="1"/><line x1="10" y1="318.50" x2="12.5" y2="318.50" stroke="#5f5f5f" stroke-width="1"/><line x1="10" y1="322.50" x2="12.5" y2="322.50" stroke="#5f5f5f" stroke-width="1"/><line x1="1" y1="326.50" x2="12.5" y2="326.50" stroke="#5a5a5a" stroke-width="1"/><line x1="10" y1="331.50" x2="12.5" y2="331.50" stroke="#5f5f5f" stroke-width="1"/><line x1="10" y1="335.50" x2="12.5" y2="335.50" stroke="#5f5f5f" stroke-width="1"/><line x1="10" y1="339.50" x2="12.5" y2="339.50" stroke="#5f5f5f" stroke-width="1"/><line x1="10" y1="343.50" x2="12.5" y2="343.50" stroke="#5f5f5f" stroke-width="1"/><line x1="8.5" y1="348.50" x2="12.5" y2="348.50" stroke="#5f5f5f" stroke-width="1"/><line x1="10" y1="352.50" x2="12.5" y2="352.50" stroke="#5f5f5f" stroke-width="1"/><line x1="10" y1="356.50" x2="12.5" y2="356.50" stroke="#5f5f5f" stroke-width="1"/><line x1="10" y1="361.50" x2="12.5" y2="361.50" stroke="#5f5f5f" stroke-width="1"/><line x1="10" y1="365.50" x2="12.5" y2="365.50" stroke="#5f5f5f" stroke-width="1"/><line x1="1" y1="369.50" x2="12.5" y2="369.50" stroke="#5a5a5a" stroke-width="1"/><line x1="10" y1="374.50" x2="12.5" y2="374.50" stroke="#5f5f5f" stroke-width="1"/><line x1="10" y1="378.50" x2="12.5" y2="378.50" stroke="#5f5f5f" stroke-width="1"/><line x1="10" y1="382.50" x2="12.5" y2="382.50" stroke="#5f5f5f" stroke-width="1"/><line x1="10" y1="387.50" x2="12.5" y2="387.50" stroke="#5f5f5f" stroke-width="1"/><line x1="8.5" y1="391.50" x2="12.5" y2="391.50" stroke="#5f5f5f" stroke-width="1"/><line x1="10" y1="395.50" x2="12.5" y2="395.50" stroke="#5f5f5f" stroke-width="1"/><line x1="10" y1="400.50" x2="12.5" y2="400.50" stroke="#5f5f5f" stroke-width="1"/><line x1="10" y1="404.50" x2="12.5" y2="404.50" stroke="#5f5f5f" stroke-width="1"/><line x1="10" y1="408.50" x2="12.5" y2="408.50" stroke="#5f5f5f" stroke-width="1"/><line x1="1" y1="412.50" x2="12.5" y2="412.50" stroke="#5a5a5a" stroke-width="1"/><line x1="10" y1="417.50" x2="12.5" y2="417.50" stroke="#5f5f5f" stroke-width="1"/><line x1="10" y1="421.50" x2="12.5" y2="421.50" stroke="#5f5f5f" stroke-width="1"/><line x1="10" y1="425.50" x2="12.5" y2="425.50" stroke="#5f5f5f" stroke-width="1"/><line x1="10" y1="430.50" x2="12.5" y2="430.50" stroke="#5f5f5f" stroke-width="1"/><line x1="8.5" y1="434.50" x2="12.5" y2="434.50" stroke="#5f5f5f" stroke-width="1"/><line x1="10" y1="438.50" x2="12.5" y2="438.50" stroke="#5f5f5f" stroke-width="1"/><line x1="10" y1="443.50" x2="12.5" y2="443.50" stroke="#5f5f5f" stroke-width="1"/><line x1="10" y1="447.50" x2="12.5" y2="447.50" stroke="#5f5f5f" stroke-width="1"/><line x1="10" y1="451.50" x2="12.5" y2="451.50" stroke="#5f5f5f" stroke-width="1"/><line x1="1" y1="456.50" x2="12.5" y2="456.50" stroke="#5a5a5a" stroke-width="1"/><line x1="10" y1="460.50" x2="12.5" y2="460.50" stroke="#5f5f5f" stroke-width="1"/><line x1="10" y1="464.50" x2="12.5" y2="464.50" stroke="#5f5f5f" stroke-width="1"/><line x1="10" y1="468.50" x2="12.5" y2="468.50" stroke="#5f5f5f" stroke-width="1"/><line x1="10" y1="473.50" x2="12.5" y2="473.50" stroke="#5f5f5f" stroke-width="1"/><line x1="8.5" y1="477.50" x2="12.5" y2="477.50" stroke="#5f5f5f" stroke-width="1"/><line x1="10" y1="481.50" x2="12.5" y2="481.50" stroke="#5f5f5f" stroke-width="1"/><line x1="10" y1="486.50" x2="12.5" y2="486.50" stroke="#5f5f5f" stroke-width="1"/><line x1="10" y1="490.50" x2="12.5" y2="490.50" stroke="#5f5f5f" stroke-width="1"/><line x1="10" y1="494.50" x2="12.5" y2="494.50" stroke="#5f5f5f" stroke-width="1"/><line x1="1" y1="499.50" x2="12.5" y2="499.50" stroke="#5a5a5a" stroke-width="1"/><line x1="10" y1="503.50" x2="12.5" y2="503.50" stroke="#5f5f5f" stroke-width="1"/><line x1="10" y1="507.50" x2="12.5" y2="507.50" stroke="#5f5f5f" stroke-width="1"/><line x1="10" y1="512.50" x2="12.5" y2="512.50" stroke="#5f5f5f" stroke-width="1"/><line x1="10" y1="516.50" x2="12.5" y2="516.50" stroke="#5f5f5f" stroke-width="1"/><line x1="8.5" y1="520.50" x2="12.5" y2="520.50" stroke="#5f5f5f" stroke-width="1"/><line x1="10" y1="525.50" x2="12.5" y2="525.50" stroke="#5f5f5f" stroke-width="1"/><line x1="10" y1="529.50" x2="12.5" y2="529.50" stroke="#5f5f5f" stroke-width="1"/><line x1="10" y1="533.50" x2="12.5" y2="533.50" stroke="#5f5f5f" stroke-width="1"/><line x1="10" y1="537.50" x2="12.5" y2="537.50" stroke="#5f5f5f" stroke-width="1"/><line x1="1" y1="542.50" x2="12.5" y2="542.50" stroke="#5a5a5a" stroke-width="1"/><line x1="10" y1="546.50" x2="12.5" y2="546.50" stroke="#5f5f5f" stroke-width="1"/><line x1="10" y1="550.50" x2="12.5" y2="550.50" stroke="#5f5f5f" stroke-width="1"/><line x1="10" y1="555.50" x2="12.5" y2="555.50" stroke="#5f5f5f" stroke-width="1"/><line x1="10" y1="559.50" x2="12.5" y2="559.50" stroke="#5f5f5f" stroke-width="1"/><line x1="8.5" y1="563.50" x2="12.5" y2="563.50" stroke="#5f5f5f" stroke-width="1"/><line x1="10" y1="568.50" x2="12.5" y2="568.50" stroke="#5f5f5f" stroke-width="1"/><line x1="10" y1="572.50" x2="12.5" y2="572.50" stroke="#5f5f5f" stroke-width="1"/><line x1="10" y1="576.50" x2="12.5" y2="576.50" stroke="#5f5f5f" stroke-width="1"/><line x1="10" y1="581.50" x2="12.5" y2="581.50" stroke="#5f5f5f" stroke-width="1"/><line x1="1" y1="585.50" x2="12.5" y2="585.50" stroke="#5a5a5a" stroke-width="1"/><line x1="10" y1="589.50" x2="12.5" y2="589.50" stroke="#5f5f5f" stroke-width="1"/><line x1="10" y1="594.50" x2="12.5" y2="594.50" stroke="#5f5f5f" stroke-width="1"/><line x1="10" y1="598.50" x2="12.5" y2="598.50" stroke="#5f5f5f" stroke-width="1"/><line x1="10" y1="602.50" x2="12.5" y2="602.50" stroke="#5f5f5f" stroke-width="1"/><line x1="8.5" y1="606.50" x2="12.5" y2="606.50" stroke="#5f5f5f" stroke-width="1"/><line x1="10" y1="611.50" x2="12.5" y2="611.50" stroke="#5f5f5f" stroke-width="1"/><line x1="10" y1="615.50" x2="12.5" y2="615.50" stroke="#5f5f5f" stroke-width="1"/><line x1="10" y1="619.50" x2="12.5" y2="619.50" stroke="#5f5f5f" stroke-width="1"/><line x1="10" y1="624.50" x2="12.5" y2="624.50" stroke="#5f5f5f" stroke-width="1"/><line x1="1" y1="628.50" x2="12.5" y2="628.50" stroke="#5a5a5a" stroke-width="1"/><line x1="10" y1="632.50" x2="12.5" y2="632.50" stroke="#5f5f5f" stroke-width="1"/><line x1="10" y1="637.50" x2="12.5" y2="637.50" stroke="#5f5f5f" stroke-width="1"/><line x1="10" y1="641.50" x2="12.5" y2="641.50" stroke="#5f5f5f" stroke-width="1"/><line x1="10" y1="645.50" x2="12.5" y2="645.50" stroke="#5f5f5f" stroke-width="1"/><line x1="8.5" y1="650.50" x2="12.5" y2="650.50" stroke="#5f5f5f" stroke-width="1"/><line x1="10" y1="654.50" x2="12.5" y2="654.50" stroke="#5f5f5f" stroke-width="1"/><line x1="10" y1="658.50" x2="12.5" y2="658.50" stroke="#5f5f5f" stroke-width="1"/><line x1="10" y1="663.50" x2="12.5" y2="663.50" stroke="#5f5f5f" stroke-width="1"/></svg>
<div class="t" style="left:33.70px;top:93.00px;font-size:9px;color:#b4b4b4;font-weight:normal;font-family:'Liberation Sans',sans-serif;">2</div>
<div class="t" style="left:33.70px;top:102.00px;font-size:9px;color:#b4b4b4;font-weight:normal;font-family:'Liberation Sans',sans-serif;">0</div>
<div class="t" style="left:33.70px;top:136.00px;font-size:9px;color:#b4b4b4;font-weight:normal;font-family:'Liberation Sans',sans-serif;">1</div>
<div class="t" style="left:33.70px;top:145.00px;font-size:9px;color:#b4b4b4;font-weight:normal;font-family:'Liberation Sans',sans-serif;">0</div>
<div class="t" style="left:33.70px;top:179.00px;font-size:9px;color:#b4b4b4;font-weight:normal;font-family:'Liberation Sans',sans-serif;">0</div>
<div class="t" style="left:33.70px;top:222.00px;font-size:9px;color:#b4b4b4;font-weight:normal;font-family:'Liberation Sans',sans-serif;">1</div>
<div class="t" style="left:33.70px;top:231.00px;font-size:9px;color:#b4b4b4;font-weight:normal;font-family:'Liberation Sans',sans-serif;">0</div>
<div class="t" style="left:33.70px;top:265.00px;font-size:9px;color:#b4b4b4;font-weight:normal;font-family:'Liberation Sans',sans-serif;">2</div>
<div class="t" style="left:33.70px;top:274.00px;font-size:9px;color:#b4b4b4;font-weight:normal;font-family:'Liberation Sans',sans-serif;">0</div>
<div class="t" style="left:33.70px;top:308.00px;font-size:9px;color:#b4b4b4;font-weight:normal;font-family:'Liberation Sans',sans-serif;">3</div>
<div class="t" style="left:33.70px;top:317.00px;font-size:9px;color:#b4b4b4;font-weight:normal;font-family:'Liberation Sans',sans-serif;">0</div>
<div class="t" style="left:33.70px;top:352.00px;font-size:9px;color:#b4b4b4;font-weight:normal;font-family:'Liberation Sans',sans-serif;">4</div>
<div class="t" style="left:33.70px;top:361.00px;font-size:9px;color:#b4b4b4;font-weight:normal;font-family:'Liberation Sans',sans-serif;">0</div>
<div class="t" style="left:33.70px;top:395.00px;font-size:9px;color:#b4b4b4;font-weight:normal;font-family:'Liberation Sans',sans-serif;">5</div>
<div class="t" style="left:33.70px;top:404.00px;font-size:9px;color:#b4b4b4;font-weight:normal;font-family:'Liberation Sans',sans-serif;">0</div>
<div class="t" style="left:33.70px;top:438.00px;font-size:9px;color:#b4b4b4;font-weight:normal;font-family:'Liberation Sans',sans-serif;">6</div>
<div class="t" style="left:33.70px;top:447.00px;font-size:9px;color:#b4b4b4;font-weight:normal;font-family:'Liberation Sans',sans-serif;">0</div>
<div class="t" style="left:33.70px;top:481.00px;font-size:9px;color:#b4b4b4;font-weight:normal;font-family:'Liberation Sans',sans-serif;">7</div>
<div class="t" style="left:33.70px;top:490.00px;font-size:9px;color:#b4b4b4;font-weight:normal;font-family:'Liberation Sans',sans-serif;">0</div>
<div class="t" style="left:33.70px;top:524.00px;font-size:9px;color:#b4b4b4;font-weight:normal;font-family:'Liberation Sans',sans-serif;">8</div>
<div class="t" style="left:33.70px;top:533.00px;font-size:9px;color:#b4b4b4;font-weight:normal;font-family:'Liberation Sans',sans-serif;">0</div>
<div class="t" style="left:33.70px;top:567.00px;font-size:9px;color:#b4b4b4;font-weight:normal;font-family:'Liberation Sans',sans-serif;">9</div>
<div class="t" style="left:33.70px;top:576.00px;font-size:9px;color:#b4b4b4;font-weight:normal;font-family:'Liberation Sans',sans-serif;">0</div>
<div class="t" style="left:33.70px;top:610.00px;font-size:9px;color:#b4b4b4;font-weight:normal;font-family:'Liberation Sans',sans-serif;">1</div>
<div class="t" style="left:33.70px;top:619.00px;font-size:9px;color:#b4b4b4;font-weight:normal;font-family:'Liberation Sans',sans-serif;">0</div>
<div class="t" style="left:33.70px;top:628.00px;font-size:9px;color:#b4b4b4;font-weight:normal;font-family:'Liberation Sans',sans-serif;">0</div>
<div class="t" style="left:33.70px;top:653.00px;font-size:9px;color:#b4b4b4;font-weight:normal;font-family:'Liberation Sans',sans-serif;">1</div>
<div class="t" style="left:33.70px;top:662.00px;font-size:9px;color:#b4b4b4;font-weight:normal;font-family:'Liberation Sans',sans-serif;">1</div>
<div class="t" style="left:33.70px;top:671.00px;font-size:9px;color:#b4b4b4;font-weight:normal;font-family:'Liberation Sans',sans-serif;">0</div>
<div class="t" style="left:33.70px;top:697.00px;font-size:9px;color:#b4b4b4;font-weight:normal;font-family:'Liberation Sans',sans-serif;">1</div>
<div class="t" style="left:33.70px;top:706.00px;font-size:9px;color:#b4b4b4;font-weight:normal;font-family:'Liberation Sans',sans-serif;">2</div>
<div class="t" style="left:33.70px;top:715.00px;font-size:9px;color:#b4b4b4;font-weight:normal;font-family:'Liberation Sans',sans-serif;">0</div>
<div class="a" style="left:33px;top:67px;width:12px;height:13px;background:#4f4f4f;"></div>
<svg class="a" style="left:33px;top:67px;" width="12" height="13" viewBox="0 0 12 13"><path d="M0 9.5H12M8.5 0V13" stroke="#555555" stroke-width="1"/></svg>
<div class="a" style="left:31px;top:46px;width:2px;height:699px;background:#444444;"></div>
<div class="a" style="left:45px;top:80px;width:596px;height:653px;overflow:hidden">
<div class="a" style="left:69px;top:98px;width:458px;height:457px;background:#6ab22f"></div>
<div class="a" style="left:153px;top:190px;width:151px;height:44px;background:#404040;border:1px solid #2e2e2e"></div>
<div class="a" style="left:350px;top:254px;width:89px;height:48px;background:#000000;border:1px solid #000000"></div>
<div class="a" style="left:230.5px;top:313px;width:133.5px;height:63px;background:#616161;border:1px solid #3c3c3c"></div>
<svg class="a" style="left:224.60000000000002px;top:207.2px" width="24" height="24" viewBox="0 0 24 24"><circle cx="10" cy="10" r="3.8" fill="none" stroke="#e6e6e6" stroke-width="1.3"/><circle cx="10" cy="10" r="0.6" fill="#e6e6e6"/><path d="M1.5 10H6M14 10H18.5M10 1.5V6M10 14V18.5" stroke="#e6e6e6" stroke-width="1.3"/></svg>
<div class="t" style="left:238.10000000000002px;top:220.2px;font-size:7px;color:#d0d0d0">1</div>
<svg class="a" style="left:382.3px;top:265.4px" width="24" height="24" viewBox="0 0 24 24"><circle cx="10" cy="10" r="3.8" fill="none" stroke="#e6e6e6" stroke-width="1.3"/><circle cx="10" cy="10" r="0.6" fill="#e6e6e6"/><path d="M1.5 10H6M14 10H18.5M10 1.5V6M10 14V18.5" stroke="#e6e6e6" stroke-width="1.3"/></svg>
<div class="t" style="left:395.8px;top:278.4px;font-size:7px;color:#d0d0d0">2</div>
<svg class="a" style="left:306.9px;top:329.7px" width="24" height="24" viewBox="0 0 24 24"><circle cx="10" cy="10" r="3.8" fill="none" stroke="#e6e6e6" stroke-width="1.3"/><circle cx="10" cy="10" r="0.6" fill="#e6e6e6"/><path d="M1.5 10H6M14 10H18.5M10 1.5V6M10 14V18.5" stroke="#e6e6e6" stroke-width="1.3"/></svg>
<div class="t" style="left:320.4px;top:342.7px;font-size:7px;color:#d0d0d0">3</div>
<div class="t" style="left:105.30000000000001px;top:126.69px;font-size:35px;font-weight:bold;color:#ffffff;font-family:'Liberation Serif',serif;letter-spacing:0.923px">ВАЖНЫЕ</div>
<div class="t" style="left:301px;top:126.69px;font-size:35px;font-weight:bold;color:#ffffff;font-family:'Liberation Serif',serif;letter-spacing:0.964px">ОБЪЕКТЫ</div>
<div class="t" style="left:105.30000000000001px;top:490.69px;font-size:35px;font-weight:bold;color:#ffffff;font-family:'Liberation Serif',serif;letter-spacing:0.923px">ВАЖНЫЕ</div>
<div class="t" style="left:301px;top:490.69px;font-size:35px;font-weight:bold;color:#ffffff;font-family:'Liberation Serif',serif;letter-spacing:0.964px">ОБЪЕКТЫ</div>
<div class="t" style="left:99.29px;top:410.80px;font-size:35px;font-weight:bold;color:#ffffff;font-family:'Liberation Serif',serif;letter-spacing:0.590px;transform-origin:0 0;transform:rotate(-90deg)">ВАЖНЫЕ</div>
<div class="t" style="left:463.89px;top:421.00px;font-size:35px;font-weight:bold;color:#ffffff;font-family:'Liberation Serif',serif;letter-spacing:0.964px;transform-origin:0 0;transform:rotate(-90deg)">ОБЪЕКТЫ</div>
<div class="a" style="left:81px;top:0;width:1px;height:653px;background:rgba(60,228,228,0.78)"></div>
<div class="a" style="left:103px;top:0;width:1px;height:653px;background:rgba(60,228,228,0.78)"></div>
<div class="a" style="left:491px;top:0;width:1px;height:653px;background:rgba(60,228,228,0.78)"></div>
<div class="a" style="left:513px;top:0;width:1px;height:653px;background:rgba(60,228,228,0.78)"></div>
<div class="a" style="left:0;top:110px;width:596px;height:1px;background:rgba(60,228,228,0.78)"></div>
<div class="a" style="left:0;top:132px;width:596px;height:1px;background:rgba(60,228,228,0.78)"></div>
<div class="a" style="left:0;top:520px;width:596px;height:1px;background:rgba(60,228,228,0.78)"></div>
<div class="a" style="left:0;top:542px;width:596px;height:1px;background:rgba(60,228,228,0.78)"></div>
</div>
<div class="a" style="left:643px;top:67px;width:9px;height:8px;background:#474747;"></div>
<svg class="a" style="left:644.5px;top:72.5px;" width="7" height="4" viewBox="0 0 7 4"><path d="M0.5 3.5L3.5 0.5L6.5 3.5" fill="none" stroke="#9a9a9a" stroke-width="0.9"/></svg>
<div class="a" style="left:641.5px;top:104px;width:9.5px;height:425px;background:#666666;border-radius:1px"></div>
<div class="a" style="left:652.6px;top:46px;width:2.4px;height:699px;background:#3c3c3c;"></div>
<svg class="a" style="left:645px;top:724px;" width="7" height="4" viewBox="0 0 7 4"><path d="M0.5 0.5L3.5 3.5L6.5 0.5" fill="none" stroke="#9a9a9a" stroke-width="1"/></svg>
<div class="a" style="left:203px;top:735px;width:438px;height:10px;background:#444444;"></div>
<div class="a" style="left:32px;top:735px;width:36px;height:10px;background:#3b3b3b;"></div>
<div class="t" style="left:43.00px;top:736.00px;font-size:7px;color:#d4d4d4;font-weight:normal;font-family:'Liberation Sans',sans-serif;letter-spacing:0.300px;">50%</div>
<div class="t" style="left:88.60px;top:736.00px;font-size:7px;color:#c4c4c4;font-weight:normal;font-family:'Liberation Sans',sans-serif;letter-spacing:-0.045px;">106 мм x 106 мм (300 ppi)</div>
<svg class="a" style="left:195px;top:737.5px;" width="4" height="7" viewBox="0 0 4 7"><path d="M0.5 0.5L3.5 3.5L0.5 6.5" fill="none" stroke="#9a9a9a" stroke-width="0.9"/></svg>
<svg class="a" style="left:208px;top:737.5px;" width="4" height="7" viewBox="0 0 4 7"><path d="M3.5 0.5L0.5 3.5L3.5 6.5" fill="none" stroke="#777" stroke-width="0.9"/></svg>
<div class="a" style="left:339px;top:736px;width:164px;height:8px;background:#5c5c5c;border-radius:1px"></div>
<svg class="a" style="left:630px;top:737px;" width="4" height="7" viewBox="0 0 4 7"><path d="M0.5 0.5L3.5 3.5L0.5 6.5" fill="none" stroke="#9a9a9a" stroke-width="0.9"/></svg>
<svg class="a" style="left:7px;top:48px;" width="6" height="4.5" viewBox="0 0 6 4.5"><path d="M0.3 0.3L2.6 2.2L0.3 4.1ZM3.3 0.3L5.6 2.2L3.3 4.1Z" fill="#d8d8d8" stroke="#d8d8d8" stroke-width="0.4"/></svg>
<svg class="a" style="left:11px;top:57px;" width="13" height="2" viewBox="0 0 13 2"><path d="M0 1H13" stroke="#474747" stroke-width="1.5" stroke-dasharray="1.3 0.9"/></svg>
<div class="a" style="left:6px;top:181.5px;width:22px;height:17px;background:#383838;"></div>
<svg class="a" style="left:10.0px;top:69.0px;" width="14" height="14" viewBox="0 0 14 14"><path d="M7 2V12M2 7H12" stroke="#dcdcdc" stroke-width="1.2"/><path d="M7 0.3L9.3 2.8H4.7ZM7 13.7L9.3 11.2H4.7ZM0.3 7L2.8 4.7V9.3ZM13.7 7L11.2 4.7V9.3Z" fill="#dcdcdc"/></svg>
<svg class="a" style="left:24.3px;top:80.8px;" width="2.6" height="2.6" viewBox="0 0 2.6 2.6"><path d="M2.6 0V2.6H0Z" fill="#a8a8a8"/></svg>
<svg class="a" style="left:10.0px;top:87.7px;" width="14" height="14" viewBox="0 0 14 14"><rect x="1.5" y="2.5" width="11" height="9" fill="none" stroke="#dcdcdc" stroke-width="1.3" stroke-dasharray="2 1.5"/></svg>
<svg class="a" style="left:24.3px;top:99.5px;" width="2.6" height="2.6" viewBox="0 0 2.6 2.6"><path d="M2.6 0V2.6H0Z" fill="#a8a8a8"/></svg>
<svg class="a" style="left:10.0px;top:106.4px;" width="14" height="14" viewBox="0 0 14 14"><ellipse cx="7.5" cy="5.5" rx="5.5" ry="4" fill="none" stroke="#dcdcdc" stroke-width="1.3"/><path d="M3.5 8.5C2.5 10 3.5 12 4.5 13" fill="none" stroke="#dcdcdc" stroke-width="1.3"/></svg>
<svg class="a" style="left:24.3px;top:118.2px;" width="2.6" height="2.6" viewBox="0 0 2.6 2.6"><path d="M2.6 0V2.6H0Z" fill="#a8a8a8"/></svg>
<svg class="a" style="left:10.0px;top:125.5px;" width="14" height="14" viewBox="0 0 14 14"><path d="M6 3A4 4 0 1 0 4 11" fill="none" stroke="#dcdcdc" stroke-width="1.2" stroke-dasharray="1.5 1.2"/><path d="M13 1L7 8.5L5.5 12.5L9 10L13.5 2Z" fill="#dcdcdc"/></svg>
<svg class="a" style="left:24.3px;top:137.3px;" width="2.6" height="2.6" viewBox="0 0 2.6 2.6"><path d="M2.6 0V2.6H0Z" fill="#a8a8a8"/></svg>
<svg class="a" style="left:10.0px;top:144.0px;" width="14" height="14" viewBox="0 0 14 14"><path d="M3.5 0.5V10.5H13.5M0.5 3.5H10.5V13.5" fill="none" stroke="#dcdcdc" stroke-width="1.6"/></svg>
<svg class="a" style="left:24.3px;top:155.8px;" width="2.6" height="2.6" viewBox="0 0 2.6 2.6"><path d="M2.6 0V2.6H0Z" fill="#a8a8a8"/></svg>
<svg class="a" style="left:10.0px;top:163.9px;" width="14" height="14" viewBox="0 0 14 14"><rect x="1.5" y="2" width="11" height="10" fill="none" stroke="#dcdcdc" stroke-width="1"/><path d="M1.5 2L12.5 12M12.5 2L1.5 12" stroke="#dcdcdc" stroke-width="0.9"/><circle cx="1.5" cy="2" r="1" fill="#dcdcdc"/><circle cx="12.5" cy="2" r="1" fill="#dcdcdc"/><circle cx="1.5" cy="12" r="1" fill="#dcdcdc"/><circle cx="12.5" cy="12" r="1" fill="#dcdcdc"/></svg>
<svg class="a" style="left:24.3px;top:175.70000000000002px;" width="2.6" height="2.6" viewBox="0 0 2.6 2.6"><path d="M2.6 0V2.6H0Z" fill="#a8a8a8"/></svg>
<svg class="a" style="left:11px;top:184.3px;" width="12" height="12" viewBox="0 0 12 12"><g transform="scale(1.0000)"><path d="M8.2 3.8L10.6 1.4" stroke="#dcdcdc" stroke-width="3.3" stroke-linecap="round"/><path d="M5.2 3.2L8.8 6.8" stroke="#dcdcdc" stroke-width="2.5" stroke-linecap="round"/><path d="M6.6 5.4L2.0 10.0" stroke="#dcdcdc" stroke-width="3.2" stroke-linecap="round"/><path d="M5.6 6.4L2.3 9.7" stroke="#383838" stroke-width="1.1" stroke-linecap="round"/></g></svg>
<svg class="a" style="left:24.5px;top:194.5px;" width="2.5" height="2.5" viewBox="0 0 2.5 2.5"><path d="M2.5 0V2.5H0Z" fill="#bdbdbd"/></svg>
<svg class="a" style="left:9.0px;top:201.7px;" width="16" height="16" viewBox="0 0 16 16"><path d="M4.5 1A3.5 3.5 0 0 0 1 4.5" fill="none" stroke="#dcdcdc" stroke-width="0.9" stroke-dasharray="1.2 1"/><g transform="rotate(-45 8 8)"><rect x="1" y="5.2" width="14" height="5.6" rx="1.5" fill="#dcdcdc"/><rect x="5.5" y="5.8" width="5" height="4.4" fill="#535353"/><path d="M6.5 6.8H9.5V9.2H6.5Z" fill="none" stroke="#dcdcdc" stroke-width="0.8"/></g></svg>
<svg class="a" style="left:24.3px;top:214.5px;" width="2.6" height="2.6" viewBox="0 0 2.6 2.6"><path d="M2.6 0V2.6H0Z" fill="#a8a8a8"/></svg>
<svg class="a" style="left:10.0px;top:221.4px;" width="14" height="14" viewBox="0 0 14 14"><path d="M13 1L7 7.5L8.5 9L13.5 1.5Z" fill="#dcdcdc"/><path d="M6.5 8C4 8 3.5 10 3 13C5.5 12.5 8 12 8 9.5Z" fill="#dcdcdc"/></svg>
<svg class="a" style="left:24.3px;top:233.20000000000002px;" width="2.6" height="2.6" viewBox="0 0 2.6 2.6"><path d="M2.6 0V2.6H0Z" fill="#a8a8a8"/></svg>
<svg class="a" style="left:10.0px;top:240.0px;" width="14" height="14" viewBox="0 0 14 14"><circle cx="7" cy="3.5" r="2.8" fill="#dcdcdc"/><rect x="6" y="5" width="2" height="3" fill="#dcdcdc"/><rect x="1.5" y="7.5" width="11" height="3.5" rx="1" fill="#dcdcdc"/><rect x="1.5" y="11.8" width="11" height="1.2" fill="#dcdcdc"/></svg>
<svg class="a" style="left:24.3px;top:251.8px;" width="2.6" height="2.6" viewBox="0 0 2.6 2.6"><path d="M2.6 0V2.6H0Z" fill="#a8a8a8"/></svg>
<svg class="a" style="left:10.0px;top:260.0px;" width="14" height="14" viewBox="0 0 14 14"><path d="M13 1L7 7.5L8.5 9L13.5 1.5Z" fill="#dcdcdc"/><path d="M6.5 8C4 8 3.5 10 3 13C5.5 12.5 8 12 8 9.5Z" fill="#dcdcdc"/><path d="M1 5A5 5 0 0 1 8 1" fill="none" stroke="#dcdcdc" stroke-width="1.2"/></svg>
<svg class="a" style="left:24.3px;top:271.8px;" width="2.6" height="2.6" viewBox="0 0 2.6 2.6"><path d="M2.6 0V2.6H0Z" fill="#a8a8a8"/></svg>
<svg class="a" style="left:10.0px;top:278.0px;" width="14" height="14" viewBox="0 0 14 14"><path d="M8 1.5L13 6.5L7 12.5H3.5L1.5 10.5Z" fill="none" stroke="#dcdcdc" stroke-width="1.3"/><path d="M8 1.5L13 6.5L9.5 10L4.5 5Z" fill="#dcdcdc"/><path d="M7 12.5H13" stroke="#dcdcdc" stroke-width="1"/></svg>
<svg class="a" style="left:24.3px;top:289.8px;" width="2.6" height="2.6" viewBox="0 0 2.6 2.6"><path d="M2.6 0V2.6H0Z" fill="#a8a8a8"/></svg>
<svg class="a" style="left:9.5px;top:296.4px;" width="15" height="14" viewBox="0 0 15 14"><path d="M5.5 2.5L11.5 8.5L7 13L1 7Z" fill="none" stroke="#dcdcdc" stroke-width="1.3"/><path d="M3.2 4.8L9.3 10.8" stroke="#dcdcdc" stroke-width="1"/><path d="M5.5 2.5C4.5 1 6 0 7 0.8L9 3" fill="none" stroke="#dcdcdc" stroke-width="1"/><path d="M12.5 8C13.8 9.8 14 11 12.6 11.6C11.3 11.2 11.6 9.8 12.5 8Z" fill="#dcdcdc"/></svg>
<svg class="a" style="left:24.3px;top:308.2px;" width="2.6" height="2.6" viewBox="0 0 2.6 2.6"><path d="M2.6 0V2.6H0Z" fill="#a8a8a8"/></svg>
<svg class="a" style="left:10.0px;top:315.8px;" width="14" height="14" viewBox="0 0 14 14"><path d="M7 1C9 4.5 11 7 11 9.5A4 4 0 0 1 3 9.5C3 7 5 4.5 7 1Z" fill="#dcdcdc"/></svg>
<svg class="a" style="left:24.3px;top:327.6px;" width="2.6" height="2.6" viewBox="0 0 2.6 2.6"><path d="M2.6 0V2.6H0Z" fill="#a8a8a8"/></svg>
<svg class="a" style="left:10.0px;top:335.0px;" width="14" height="14" viewBox="0 0 14 14"><circle cx="8.5" cy="5" r="4" fill="#dcdcdc"/><path d="M6 8L1.5 12.5" stroke="#dcdcdc" stroke-width="1.8"/></svg>
<svg class="a" style="left:24.3px;top:346.8px;" width="2.6" height="2.6" viewBox="0 0 2.6 2.6"><path d="M2.6 0V2.6H0Z" fill="#a8a8a8"/></svg>
<svg class="a" style="left:10.0px;top:355.0px;" width="14" height="14" viewBox="0 0 14 14"><path d="M2 12.5L3.5 6L9 1L13 5L8 10.5Z" fill="none" stroke="#dcdcdc" stroke-width="1.3"/><path d="M2 12.5L6 8.5" stroke="#dcdcdc" stroke-width="1"/><circle cx="6.8" cy="7.5" r="1" fill="#dcdcdc"/></svg>
<svg class="a" style="left:24.3px;top:366.8px;" width="2.6" height="2.6" viewBox="0 0 2.6 2.6"><path d="M2.6 0V2.6H0Z" fill="#a8a8a8"/></svg>
<svg class="a" style="left:10.0px;top:373.4px;" width="14" height="14" viewBox="0 0 14 14"><path d="M1.5 1.5H12.5V4.5H11.5V3H8.3V12H10V13.2H4V12H5.7V3H2.5V4.5H1.5Z" fill="#dcdcdc"/></svg>
<svg class="a" style="left:24.3px;top:385.2px;" width="2.6" height="2.6" viewBox="0 0 2.6 2.6"><path d="M2.6 0V2.6H0Z" fill="#a8a8a8"/></svg>
<svg class="a" style="left:10.0px;top:391.8px;" width="14" height="14" viewBox="0 0 14 14"><path d="M3 1V12.5L6 9.5L8.5 13L10 12L7.5 8.7H11.5Z" fill="#dcdcdc"/></svg>
<svg class="a" style="left:24.3px;top:403.6px;" width="2.6" height="2.6" viewBox="0 0 2.6 2.6"><path d="M2.6 0V2.6H0Z" fill="#a8a8a8"/></svg>
<svg class="a" style="left:10.0px;top:411.0px;" width="14" height="14" viewBox="0 0 14 14"><rect x="1" y="2.5" width="12" height="9" fill="none" stroke="#dcdcdc" stroke-width="1.5"/></svg>
<svg class="a" style="left:24.3px;top:422.8px;" width="2.6" height="2.6" viewBox="0 0 2.6 2.6"><path d="M2.6 0V2.6H0Z" fill="#a8a8a8"/></svg>
<svg class="a" style="left:10.0px;top:430.0px;" width="14" height="14" viewBox="0 0 14 14"><path d="M3.5 7V3.5A1 1 0 0 1 5.5 3.5V6.5V2A1 1 0 0 1 7.5 2V6.5V2.5A1 1 0 0 1 9.5 2.5V7V4A1 1 0 0 1 11.5 4V9C11.5 12 10 13.5 7.5 13.5C5 13.5 4 12 2 9.5L1 8A1 1 0 0 1 3 7Z" fill="#dcdcdc"/></svg>
<svg class="a" style="left:24.3px;top:441.8px;" width="2.6" height="2.6" viewBox="0 0 2.6 2.6"><path d="M2.6 0V2.6H0Z" fill="#a8a8a8"/></svg>
<svg class="a" style="left:10.0px;top:448.6px;" width="14" height="14" viewBox="0 0 14 14"><circle cx="6" cy="6" r="4.2" fill="none" stroke="#dcdcdc" stroke-width="1.5"/><path d="M9 9L13 13" stroke="#dcdcdc" stroke-width="2"/></svg>
<svg class="a" style="left:24.3px;top:460.40000000000003px;" width="2.6" height="2.6" viewBox="0 0 2.6 2.6"><path d="M2.6 0V2.6H0Z" fill="#a8a8a8"/></svg>
<svg class="a" style="left:10px;top:473px;" width="14" height="4" viewBox="0 0 14 4"><circle cx="2" cy="2" r="1.3" fill="#dcdcdc"/><circle cx="7" cy="2" r="1.3" fill="#dcdcdc"/><circle cx="12" cy="2" r="1.3" fill="#dcdcdc"/></svg>
<svg class="a" style="left:25px;top:477px;" width="3" height="3" viewBox="0 0 3 3"><path d="M3 0V3H0Z" fill="#bdbdbd"/></svg>
<svg class="a" style="left:6px;top:488px;" width="8" height="8" viewBox="0 0 8 8"><rect x="2.5" y="2.5" width="5" height="5" fill="#535353" stroke="#dcdcdc"/><rect x="0.5" y="0.5" width="5" height="5" fill="#dcdcdc"/></svg>
<svg class="a" style="left:18px;top:488px;" width="8" height="8" viewBox="0 0 8 8"><path d="M1 2.5H6.5V7M4.5 5L6.5 7.2L8 5.5M3 0.5L1 2.5L3 4.5" fill="none" stroke="#dcdcdc" stroke-width="1"/></svg>
<div class="a" style="left:13px;top:508px;width:14px;height:13px;background:#6ab22f;border:1px solid #e8e8e8"></div>
<div class="a" style="left:6px;top:500.5px;width:14px;height:13.5px;background:#3b3b3b;border:1px solid #e8e8e8"></div>
<svg class="a" style="left:11px;top:529px;" width="12" height="11" viewBox="0 0 12 11"><rect x="0.5" y="0.5" width="11" height="9" fill="none" stroke="#dcdcdc" stroke-width="1"/><circle cx="6" cy="5" r="2.5" fill="none" stroke="#dcdcdc" stroke-width="1" stroke-dasharray="1 1"/></svg>
<svg class="a" style="left:10px;top:548px;" width="14" height="12" viewBox="0 0 14 12"><rect x="3.5" y="0.5" width="9" height="7" fill="none" stroke="#dcdcdc" stroke-width="1"/><rect x="0.5" y="3.5" width="9" height="7" fill="#535353" stroke="#dcdcdc" stroke-width="1"/></svg>
<svg class="a" style="left:25px;top:557px;" width="3" height="3" viewBox="0 0 3 3"><path d="M3 0V3H0Z" fill="#bdbdbd"/></svg>
<svg class="a" style="left:672.5px;top:48px;" width="6" height="4.5" viewBox="0 0 6 4.5"><path d="M5.7 0.3L3.4 2.2L5.7 4.1ZM2.7 0.3L0.4 2.2L2.7 4.1Z" fill="#d8d8d8" stroke="#d8d8d8" stroke-width="0.4"/></svg>
<svg class="a" style="left:754.5px;top:48px;" width="6" height="4.5" viewBox="0 0 6 4.5"><path d="M5.7 0.3L3.4 2.2L5.7 4.1ZM2.7 0.3L0.4 2.2L2.7 4.1Z" fill="#d8d8d8" stroke="#d8d8d8" stroke-width="0.4"/></svg>
<div class="a" style="left:655px;top:104px;width:27px;height:1.5px;background:#3f3f3f;"></div>
<div class="a" style="left:655px;top:134.5px;width:27px;height:1.5px;background:#3f3f3f;"></div>
<div class="a" style="left:655px;top:184.5px;width:27px;height:1.5px;background:#3f3f3f;"></div>
<div class="a" style="left:682px;top:54px;width:2px;height:691px;background:#3b3b3b;"></div>
<div class="a" style="left:684px;top:145px;width:80px;height:1.5px;background:#3f3f3f;"></div>
<div class="a" style="left:684px;top:216px;width:80px;height:1.5px;background:#3f3f3f;"></div>
<div class="a" style="left:764px;top:46px;width:1px;height:700px;background:#3e3e3e;"></div>
<svg class="a" style="left:661.5px;top:57.5px;" width="13" height="2" viewBox="0 0 13 2"><path d="M0 1H13" stroke="#464646" stroke-width="1.5" stroke-dasharray="1.3 0.9"/></svg>
<svg class="a" style="left:717px;top:57.5px;" width="13" height="2" viewBox="0 0 13 2"><path d="M0 1H13" stroke="#464646" stroke-width="1.5" stroke-dasharray="1.3 0.9"/></svg>
<svg class="a" style="left:661.5px;top:107.5px;" width="13" height="2" viewBox="0 0 13 2"><path d="M0 1H13" stroke="#464646" stroke-width="1.5" stroke-dasharray="1.3 0.9"/></svg>
<svg class="a" style="left:661.5px;top:138.5px;" width="13" height="2" viewBox="0 0 13 2"><path d="M0 1H13" stroke="#464646" stroke-width="1.5" stroke-dasharray="1.3 0.9"/></svg>
<svg class="a" style="left:717px;top:149px;" width="13" height="2" viewBox="0 0 13 2"><path d="M0 1H13" stroke="#464646" stroke-width="1.5" stroke-dasharray="1.3 0.9"/></svg>
<svg class="a" style="left:661px;top:64px;" width="15" height="15" viewBox="0 0 15 15"><circle cx="7.5" cy="7.5" r="3.8" fill="none" stroke="#dcdcdc" stroke-width="1.1"/><circle cx="7.5" cy="7.5" r="1.2" fill="#dcdcdc"/><path d="M7.5 0.3V14.7M0.3 7.5H14.7M2.4 2.4L12.6 12.6M12.6 2.4L2.4 12.6" stroke="#dcdcdc" stroke-width="1"/></svg>
<svg class="a" style="left:661px;top:86px;" width="14" height="11" viewBox="0 0 14 11"><path d="M0.5 10.5V6.5L1.3 5L2 7L2.8 3.5L3.6 6L4.5 1.8L5.3 5.5L6.2 0.5L7 4.5L7.8 2.5L8.6 5.5L9.5 1.5L10.3 5L11.2 3L12 6.5L12.8 4.5L13.5 6.5V10.5Z" fill="#dcdcdc"/></svg>
<div class="a" style="left:658px;top:113.5px;width:20px;height:16.5px;background:#383838;border-radius:2px"></div>
<svg class="a" style="left:661.5px;top:115px;" width="13" height="13" viewBox="0 0 13 13"><circle cx="6.5" cy="6.5" r="5.6" fill="none" stroke="#dcdcdc" stroke-width="1.2"/><rect x="5.8" y="5.5" width="1.5" height="4.3" fill="#dcdcdc"/><rect x="5.8" y="3" width="1.5" height="1.5" fill="#dcdcdc"/></svg>
<div class="t" style="left:663.70px;top:147.00px;font-size:12.8px;color:#dcdcdc;font-weight:normal;font-family:'Liberation Sans',sans-serif;">A</div>
<div class="a" style="left:672.6px;top:145.5px;width:1px;height:13px;background:#dcdcdc;"></div>
<svg class="a" style="left:664.6px;top:166.3px;" width="9" height="11.5" viewBox="0 0 9 11.5"><path d="M4.2 0.2H8.8V1.6H8V11.3H6.8V1.6H5.9V11.3H4.7V6.4H4.2A3.1 3.1 0 0 1 4.2 0.2Z" fill="#dcdcdc"/></svg>
<div class="t" style="left:711.00px;top:68.00px;font-size:8.4px;color:#ececec;font-weight:bold;font-family:'Liberation Sans',sans-serif;letter-spacing:-1.022px;">Цвет</div>
<div class="t" style="left:711.00px;top:88.00px;font-size:8.4px;color:#ececec;font-weight:bold;font-family:'Liberation Sans',sans-serif;letter-spacing:-1.006px;">Образцы</div>
<div class="t" style="left:711.00px;top:108.00px;font-size:8.4px;color:#ececec;font-weight:bold;font-family:'Liberation Sans',sans-serif;letter-spacing:-0.910px;">Градиенты</div>
<div class="t" style="left:711.00px;top:129.00px;font-size:8.4px;color:#ececec;font-weight:bold;font-family:'Liberation Sans',sans-serif;letter-spacing:-0.777px;">Узоры</div>
<div class="t" style="left:711.00px;top:159.00px;font-size:8.4px;color:#ececec;font-weight:bold;font-family:'Liberation Sans',sans-serif;letter-spacing:-1.041px;">Свойства</div>
<div class="t" style="left:711.00px;top:179.00px;font-size:8.4px;color:#ececec;font-weight:bold;font-family:'Liberation Sans',sans-serif;letter-spacing:-0.631px;">Коррекция</div>
<div class="t" style="left:711.00px;top:200.00px;font-size:8.4px;color:#ececec;font-weight:bold;font-family:'Liberation Sans',sans-serif;letter-spacing:-0.752px;">Библиотеки</div>
<svg class="a" style="left:690.5px;top:65.5px;" width="14" height="11" viewBox="0 0 14 11"><path d="M7 0.5C3 0.5 0.5 2.8 0.5 5.3C0.5 7.8 2.8 10.3 6.2 10.3C8.2 10.3 7.8 8.6 9.3 8.4C11.8 8.1 13.6 7.4 13.6 5C13.6 2.5 11 0.5 7 0.5Z" fill="#dcdcdc"/><circle cx="3.3" cy="5.6" r="1.1" fill="#535353"/><circle cx="5.6" cy="3.3" r="1.1" fill="#535353"/><circle cx="9" cy="3" r="1.1" fill="#535353"/><circle cx="5.2" cy="7.9" r="1.1" fill="#535353"/><circle cx="11.2" cy="5.3" r="1.1" fill="#535353"/></svg>
<svg class="a" style="left:691px;top:86.5px;" width="12" height="10" viewBox="0 0 12 10"><rect x="0.5" y="0.5" width="11" height="9" fill="none" stroke="#dcdcdc" stroke-width="1"/><path d="M0.5 3.5H11.5M0.5 6.5H11.5M4.2 0.5V9.5M7.8 0.5V9.5" stroke="#dcdcdc" stroke-width="1"/></svg>
<svg class="a" style="left:691px;top:107px" width="12" height="10"><defs><linearGradient id="g1"><stop offset="0" stop-color="#5a5a5a"/><stop offset="1" stop-color="#e0e0e0"/></linearGradient></defs><rect x="0.5" y="0.5" width="11" height="9" fill="url(#g1)" stroke="#dcdcdc" stroke-width="1"/></svg>
<svg class="a" style="left:691px;top:127.5px;" width="12" height="10" viewBox="0 0 12 10"><rect x="0" y="0" width="12" height="10" fill="#dcdcdc"/><path d="M1 3H11M1 6.5H11M3 1V9M6 1V9M9 1V9" stroke="#535353" stroke-width="0.9"/></svg>
<svg class="a" style="left:691px;top:157px;" width="12" height="11" viewBox="0 0 12 11"><path d="M0 2H12M0 5.5H12M0 9H12" stroke="#dcdcdc" stroke-width="0.9"/><circle cx="4" cy="2" r="1.5" fill="#535353" stroke="#dcdcdc"/><circle cx="8" cy="5.5" r="1.5" fill="#535353" stroke="#dcdcdc"/><circle cx="4" cy="9" r="1.5" fill="#535353" stroke="#dcdcdc"/></svg>
<svg class="a" style="left:691.5px;top:178px;" width="12" height="12" viewBox="0 0 12 12"><circle cx="6" cy="6" r="5.3" fill="none" stroke="#dcdcdc" stroke-width="1.2"/><path d="M9.8 2.2A5.3 5.3 0 0 1 2.2 9.8Z" fill="#dcdcdc"/></svg>
<svg class="a" style="left:691px;top:197px;" width="12" height="12" viewBox="0 0 12 12"><rect x="2.5" y="0.5" width="9" height="9" fill="none" stroke="#dcdcdc" stroke-width="1"/><rect x="0.5" y="2.5" width="9" height="9" fill="#535353" stroke="#dcdcdc" stroke-width="1"/><path d="M6.5 2.5V6.5L7.5 5.5L8.5 6.5V2.5Z" fill="#dcdcdc"/></svg>
<div class="a" style="left:496px;top:103px;width:157.5px;height:285px;background:#3a3a3a;"></div>
<div class="a" style="left:497px;top:106px;width:156.5px;height:20px;background:#424242;"></div>
<div class="a" style="left:497px;top:106px;width:33px;height:20.5px;background:#535353;"></div>
<div class="t" style="left:503.70px;top:112.00px;font-size:7.6px;color:#f0f0f0;font-weight:bold;font-family:'Liberation Sans',sans-serif;letter-spacing:-0.347px;">Инфо</div>
<svg class="a" style="left:625px;top:112.5px;" width="7" height="7" viewBox="0 0 7 7"><path d="M0.8 0.8L3.5 3.5L0.8 6.2M3.8 0.8L6.5 3.5L3.8 6.2" fill="none" stroke="#bdbdbd" stroke-width="0.9"/></svg>
<div class="a" style="left:636px;top:111px;width:1px;height:10px;background:#9a9a9a;"></div>
<svg class="a" style="left:642px;top:112px;" width="8" height="7" viewBox="0 0 8 7"><path d="M0 0.8H8M0 3.2H8M0 5.6H8" stroke="#bdbdbd" stroke-width="1"/></svg>
<div class="a" style="left:497px;top:126.5px;width:156.5px;height:256px;background:#535353;"></div>
<div class="a" style="left:497px;top:381.5px;width:156.5px;height:6.5px;background:#4d4d4d;"></div>
<div class="a" style="left:497px;top:381.5px;width:156.5px;height:1px;background:#434343;"></div>
<div class="a" style="left:496px;top:387.5px;width:157.5px;height:1px;background:#3c3c3c;"></div>
<svg class="a" style="left:570px;top:384px;" width="13" height="2" viewBox="0 0 13 2"><path d="M0 1H13" stroke="#464646" stroke-width="1.5" stroke-dasharray="1.3 0.9"/></svg>
<div class="a" style="left:574.5px;top:126.5px;width:1px;height:171px;background:#444444;"></div>
<div class="a" style="left:497px;top:181.5px;width:156.5px;height:1px;background:#444444;"></div>
<div class="a" style="left:497px;top:207px;width:156.5px;height:1px;background:#444444;"></div>
<div class="a" style="left:497px;top:252.5px;width:156.5px;height:1px;background:#444444;"></div>
<div class="a" style="left:497px;top:297.5px;width:156.5px;height:1px;background:#444444;"></div>
<div class="a" style="left:497px;top:318px;width:156.5px;height:1px;background:#444444;"></div>
<svg class="a" style="left:502.5px;top:144.5px;" width="10" height="10" viewBox="0 0 10 10"><g transform="scale(0.8333)"><path d="M8.2 3.8L10.6 1.4" stroke="#d2d2d2" stroke-width="3.3" stroke-linecap="round"/><path d="M5.2 3.2L8.8 6.8" stroke="#d2d2d2" stroke-width="2.5" stroke-linecap="round"/><path d="M6.6 5.4L2.0 10.0" stroke="#d2d2d2" stroke-width="3.2" stroke-linecap="round"/><path d="M5.6 6.4L2.3 9.7" stroke="#535353" stroke-width="1.1" stroke-linecap="round"/></g></svg>
<svg class="a" style="left:509.2px;top:152px;" width="3.4" height="2" viewBox="0 0 3.4 2"><path d="M0 0H3.4L1.7 2Z" fill="#d2d2d2"/></svg>
<div class="t" style="left:521.90px;top:138.00px;font-size:7.6px;color:#d2d2d2;font-weight:normal;font-family:'Liberation Sans',sans-serif;">C</div>
<div class="t" style="left:531.50px;top:138.00px;font-size:7.6px;color:#d2d2d2;font-weight:normal;font-family:'Liberation Sans',sans-serif;">:</div>
<div class="t" style="left:521.90px;top:146.00px;font-size:7.6px;color:#d2d2d2;font-weight:normal;font-family:'Liberation Sans',sans-serif;">M</div>
<div class="t" style="left:531.50px;top:146.00px;font-size:7.6px;color:#d2d2d2;font-weight:normal;font-family:'Liberation Sans',sans-serif;">:</div>
<div class="t" style="left:521.90px;top:155.00px;font-size:7.6px;color:#d2d2d2;font-weight:normal;font-family:'Liberation Sans',sans-serif;">Y</div>
<div class="t" style="left:531.50px;top:155.00px;font-size:7.6px;color:#d2d2d2;font-weight:normal;font-family:'Liberation Sans',sans-serif;">:</div>
<div class="t" style="left:521.90px;top:164.00px;font-size:7.6px;color:#d2d2d2;font-weight:normal;font-family:'Liberation Sans',sans-serif;">K</div>
<div class="t" style="left:531.50px;top:164.00px;font-size:7.6px;color:#d2d2d2;font-weight:normal;font-family:'Liberation Sans',sans-serif;">:</div>
<div class="t" style="left:514.00px;top:172.00px;font-size:7.6px;color:#d2d2d2;font-weight:normal;font-family:'Liberation Sans',sans-serif;letter-spacing:0.038px;">8-бит</div>
<svg class="a" style="left:581.5px;top:144.5px;" width="10" height="10" viewBox="0 0 10 10"><g transform="scale(0.8333)"><path d="M8.2 3.8L10.6 1.4" stroke="#d2d2d2" stroke-width="3.3" stroke-linecap="round"/><path d="M5.2 3.2L8.8 6.8" stroke="#d2d2d2" stroke-width="2.5" stroke-linecap="round"/><path d="M6.6 5.4L2.0 10.0" stroke="#d2d2d2" stroke-width="3.2" stroke-linecap="round"/><path d="M5.6 6.4L2.3 9.7" stroke="#535353" stroke-width="1.1" stroke-linecap="round"/></g></svg>
<svg class="a" style="left:588.2px;top:152px;" width="3.4" height="2" viewBox="0 0 3.4 2"><path d="M0 0H3.4L1.7 2Z" fill="#d2d2d2"/></svg>
<div class="t" style="left:598.50px;top:138.00px;font-size:7.6px;color:#d2d2d2;font-weight:normal;font-family:'Liberation Sans',sans-serif;">Σ</div>
<div class="t" style="left:608.50px;top:138.00px;font-size:7.6px;color:#d2d2d2;font-weight:normal;font-family:'Liberation Sans',sans-serif;">:</div>
<svg class="a" style="left:502px;top:192px;" width="10" height="9" viewBox="0 0 10 9"><path d="M4.5 0V9M0 4.5H9" stroke="#d2d2d2" stroke-width="1.1"/><path d="M7 7H10L8.5 8.5Z" fill="#d2d2d2"/></svg>
<div class="t" style="left:521.90px;top:190.00px;font-size:7.6px;color:#d2d2d2;font-weight:normal;font-family:'Liberation Sans',sans-serif;">X</div>
<div class="t" style="left:531.50px;top:190.00px;font-size:7.6px;color:#d2d2d2;font-weight:normal;font-family:'Liberation Sans',sans-serif;">:</div>
<div class="t" style="left:521.90px;top:199.00px;font-size:7.6px;color:#d2d2d2;font-weight:normal;font-family:'Liberation Sans',sans-serif;">Y</div>
<div class="t" style="left:531.50px;top:199.00px;font-size:7.6px;color:#d2d2d2;font-weight:normal;font-family:'Liberation Sans',sans-serif;">:</div>
<svg class="a" style="left:581px;top:191px;" width="11" height="12" viewBox="0 0 11 12"><path d="M2.5 2.5H9.5V9.5H2.5Z" fill="none" stroke="#d2d2d2" stroke-width="1"/><path d="M8 0.5L10 2.5L8 2.5Z M0.5 10L2.5 12V10Z" fill="#d2d2d2"/></svg>
<div class="t" style="left:599.00px;top:190.00px;font-size:7.6px;color:#d2d2d2;font-weight:normal;font-family:'Liberation Sans',sans-serif;">Ш</div>
<div class="t" style="left:608.50px;top:190.00px;font-size:7.6px;color:#d2d2d2;font-weight:normal;font-family:'Liberation Sans',sans-serif;">:</div>
<div class="t" style="left:600.00px;top:199.00px;font-size:7.6px;color:#d2d2d2;font-weight:normal;font-family:'Liberation Sans',sans-serif;">В</div>
<div class="t" style="left:608.50px;top:199.00px;font-size:7.6px;color:#d2d2d2;font-weight:normal;font-family:'Liberation Sans',sans-serif;">:</div>
<div class="t" style="left:503.00px;top:214.00px;font-size:7.6px;color:#d2d2d2;font-weight:normal;font-family:'Liberation Sans',sans-serif;">#1</div>
<svg class="a" style="left:502.5px;top:222.5px;" width="10" height="10" viewBox="0 0 10 10"><g transform="scale(0.8333)"><path d="M8.2 3.8L10.6 1.4" stroke="#d2d2d2" stroke-width="3.3" stroke-linecap="round"/><path d="M5.2 3.2L8.8 6.8" stroke="#d2d2d2" stroke-width="2.5" stroke-linecap="round"/><path d="M6.6 5.4L2.0 10.0" stroke="#d2d2d2" stroke-width="3.2" stroke-linecap="round"/><path d="M5.6 6.4L2.3 9.7" stroke="#535353" stroke-width="1.1" stroke-linecap="round"/></g></svg>
<svg class="a" style="left:509.2px;top:230px;" width="3.4" height="2" viewBox="0 0 3.4 2"><path d="M0 0H3.4L1.7 2Z" fill="#d2d2d2"/></svg>
<div class="t" style="left:521.90px;top:214.00px;font-size:7.6px;color:#d2d2d2;font-weight:normal;font-family:'Liberation Sans',sans-serif;">C</div>
<div class="t" style="left:531.50px;top:214.00px;font-size:7.6px;color:#d2d2d2;font-weight:normal;font-family:'Liberation Sans',sans-serif;">:</div>
<div class="t" style="left:547.29px;top:214.00px;font-size:7.6px;color:#d2d2d2;font-weight:normal;font-family:'Liberation Sans',sans-serif;">66%</div>
<div class="t" style="left:521.90px;top:222.00px;font-size:7.6px;color:#d2d2d2;font-weight:normal;font-family:'Liberation Sans',sans-serif;">M</div>
<div class="t" style="left:531.50px;top:222.00px;font-size:7.6px;color:#d2d2d2;font-weight:normal;font-family:'Liberation Sans',sans-serif;">:</div>
<div class="t" style="left:547.29px;top:222.00px;font-size:7.6px;color:#d2d2d2;font-weight:normal;font-family:'Liberation Sans',sans-serif;">56%</div>
<div class="t" style="left:521.90px;top:231.00px;font-size:7.6px;color:#d2d2d2;font-weight:normal;font-family:'Liberation Sans',sans-serif;">Y</div>
<div class="t" style="left:531.50px;top:231.00px;font-size:7.6px;color:#d2d2d2;font-weight:normal;font-family:'Liberation Sans',sans-serif;">:</div>
<div class="t" style="left:547.29px;top:231.00px;font-size:7.6px;color:#d2d2d2;font-weight:normal;font-family:'Liberation Sans',sans-serif;">53%</div>
<div class="t" style="left:521.90px;top:240.00px;font-size:7.6px;color:#d2d2d2;font-weight:normal;font-family:'Liberation Sans',sans-serif;">K</div>
<div class="t" style="left:531.50px;top:240.00px;font-size:7.6px;color:#d2d2d2;font-weight:normal;font-family:'Liberation Sans',sans-serif;">:</div>
<div class="t" style="left:547.29px;top:240.00px;font-size:7.6px;color:#d2d2d2;font-weight:normal;font-family:'Liberation Sans',sans-serif;">57%</div>
<div class="t" style="left:580.70px;top:214.00px;font-size:7.6px;color:#d2d2d2;font-weight:normal;font-family:'Liberation Sans',sans-serif;">#2</div>
<svg class="a" style="left:581.5px;top:222.5px;" width="10" height="10" viewBox="0 0 10 10"><g transform="scale(0.8333)"><path d="M8.2 3.8L10.6 1.4" stroke="#d2d2d2" stroke-width="3.3" stroke-linecap="round"/><path d="M5.2 3.2L8.8 6.8" stroke="#d2d2d2" stroke-width="2.5" stroke-linecap="round"/><path d="M6.6 5.4L2.0 10.0" stroke="#d2d2d2" stroke-width="3.2" stroke-linecap="round"/><path d="M5.6 6.4L2.3 9.7" stroke="#535353" stroke-width="1.1" stroke-linecap="round"/></g></svg>
<svg class="a" style="left:588.2px;top:230px;" width="3.4" height="2" viewBox="0 0 3.4 2"><path d="M0 0H3.4L1.7 2Z" fill="#d2d2d2"/></svg>
<div class="t" style="left:599.50px;top:214.00px;font-size:7.6px;color:#d2d2d2;font-weight:normal;font-family:'Liberation Sans',sans-serif;">C</div>
<div class="t" style="left:609.10px;top:214.00px;font-size:7.6px;color:#d2d2d2;font-weight:normal;font-family:'Liberation Sans',sans-serif;">:</div>
<div class="t" style="left:624.79px;top:214.00px;font-size:7.6px;color:#d2d2d2;font-weight:normal;font-family:'Liberation Sans',sans-serif;">91%</div>
<div class="t" style="left:599.50px;top:222.00px;font-size:7.6px;color:#d2d2d2;font-weight:normal;font-family:'Liberation Sans',sans-serif;">M</div>
<div class="t" style="left:609.10px;top:222.00px;font-size:7.6px;color:#d2d2d2;font-weight:normal;font-family:'Liberation Sans',sans-serif;">:</div>
<div class="t" style="left:624.79px;top:222.00px;font-size:7.6px;color:#d2d2d2;font-weight:normal;font-family:'Liberation Sans',sans-serif;">79%</div>
<div class="t" style="left:599.50px;top:231.00px;font-size:7.6px;color:#d2d2d2;font-weight:normal;font-family:'Liberation Sans',sans-serif;">Y</div>
<div class="t" style="left:609.10px;top:231.00px;font-size:7.6px;color:#d2d2d2;font-weight:normal;font-family:'Liberation Sans',sans-serif;">:</div>
<div class="t" style="left:624.79px;top:231.00px;font-size:7.6px;color:#d2d2d2;font-weight:normal;font-family:'Liberation Sans',sans-serif;">62%</div>
<div class="t" style="left:599.50px;top:240.00px;font-size:7.6px;color:#d2d2d2;font-weight:normal;font-family:'Liberation Sans',sans-serif;">K</div>
<div class="t" style="left:609.10px;top:240.00px;font-size:7.6px;color:#d2d2d2;font-weight:normal;font-family:'Liberation Sans',sans-serif;">:</div>
<div class="t" style="left:624.79px;top:240.00px;font-size:7.6px;color:#d2d2d2;font-weight:normal;font-family:'Liberation Sans',sans-serif;">97%</div>
<div class="t" style="left:503.00px;top:257.00px;font-size:7.6px;color:#d2d2d2;font-weight:normal;font-family:'Liberation Sans',sans-serif;">#3</div>
<svg class="a" style="left:502.5px;top:266.5px;" width="10" height="10" viewBox="0 0 10 10"><g transform="scale(0.8333)"><path d="M8.2 3.8L10.6 1.4" stroke="#d2d2d2" stroke-width="3.3" stroke-linecap="round"/><path d="M5.2 3.2L8.8 6.8" stroke="#d2d2d2" stroke-width="2.5" stroke-linecap="round"/><path d="M6.6 5.4L2.0 10.0" stroke="#d2d2d2" stroke-width="3.2" stroke-linecap="round"/><path d="M5.6 6.4L2.3 9.7" stroke="#535353" stroke-width="1.1" stroke-linecap="round"/></g></svg>
<svg class="a" style="left:509.2px;top:274px;" width="3.4" height="2" viewBox="0 0 3.4 2"><path d="M0 0H3.4L1.7 2Z" fill="#d2d2d2"/></svg>
<div class="t" style="left:521.90px;top:257.00px;font-size:7.6px;color:#d2d2d2;font-weight:normal;font-family:'Liberation Sans',sans-serif;">C</div>
<div class="t" style="left:531.50px;top:257.00px;font-size:7.6px;color:#d2d2d2;font-weight:normal;font-family:'Liberation Sans',sans-serif;">:</div>
<div class="t" style="left:547.29px;top:257.00px;font-size:7.6px;color:#d2d2d2;font-weight:normal;font-family:'Liberation Sans',sans-serif;">57%</div>
<div class="t" style="left:521.90px;top:266.00px;font-size:7.6px;color:#d2d2d2;font-weight:normal;font-family:'Liberation Sans',sans-serif;">M</div>
<div class="t" style="left:531.50px;top:266.00px;font-size:7.6px;color:#d2d2d2;font-weight:normal;font-family:'Liberation Sans',sans-serif;">:</div>
<div class="t" style="left:547.29px;top:266.00px;font-size:7.6px;color:#d2d2d2;font-weight:normal;font-family:'Liberation Sans',sans-serif;">47%</div>
<div class="t" style="left:521.90px;top:275.00px;font-size:7.6px;color:#d2d2d2;font-weight:normal;font-family:'Liberation Sans',sans-serif;">Y</div>
<div class="t" style="left:531.50px;top:275.00px;font-size:7.6px;color:#d2d2d2;font-weight:normal;font-family:'Liberation Sans',sans-serif;">:</div>
<div class="t" style="left:547.29px;top:275.00px;font-size:7.6px;color:#d2d2d2;font-weight:normal;font-family:'Liberation Sans',sans-serif;">46%</div>
<div class="t" style="left:521.90px;top:284.00px;font-size:7.6px;color:#d2d2d2;font-weight:normal;font-family:'Liberation Sans',sans-serif;">K</div>
<div class="t" style="left:531.50px;top:284.00px;font-size:7.6px;color:#d2d2d2;font-weight:normal;font-family:'Liberation Sans',sans-serif;">:</div>
<div class="t" style="left:547.29px;top:284.00px;font-size:7.6px;color:#d2d2d2;font-weight:normal;font-family:'Liberation Sans',sans-serif;">36%</div>
<div class="t" style="left:504.70px;top:306.00px;font-size:7.6px;color:#d2d2d2;font-weight:normal;font-family:'Liberation Sans',sans-serif;letter-spacing:-0.185px;">Док: 4,48M/1,49M</div>
<div class="t" style="left:505.00px;top:327.00px;font-size:7.6px;color:#d2d2d2;font-weight:normal;font-family:'Liberation Sans',sans-serif;letter-spacing:-0.180px;">Выбор нового цвета Переднего плана.</div>
<div class="t" style="left:505.00px;top:336.00px;font-size:7.6px;color:#d2d2d2;font-weight:normal;font-family:'Liberation Sans',sans-serif;letter-spacing:-0.074px;">Дополнительные возможности: с</div>
<div class="t" style="left:505.00px;top:344.00px;font-size:7.6px;color:#d2d2d2;font-weight:normal;font-family:'Liberation Sans',sans-serif;letter-spacing:-0.138px;">клавишами Shift, Alt и Ctrl.</div>
<div class="a" style="left:496.2px;top:206.2px;width:161.6px;height:95.6px;border:3.8px solid #e0382c;border-radius:6px"></div>
<div class="a" style="left:32px;top:497px;width:430px;height:238px;background:#535353;border-radius:6px;box-shadow:0 2px 14px rgba(0,0,0,0.42)"></div>
<div class="a" style="left:32px;top:497px;width:430px;height:22px;background:#ffffff;border-radius:6px 6px 0 0"></div>
<div class="t" style="left:38.70px;top:505.00px;font-size:9.3px;color:#1a1a1a;font-weight:normal;font-family:'Liberation Sans',sans-serif;letter-spacing:-0.365px;">Преобразовать в профиль</div>
<svg class="a" style="left:447px;top:503.7px;" width="8" height="7.5" viewBox="0 0 8 7.5"><path d="M0.3 0.3L7.6 7.2M7.6 0.3L0.3 7.2" stroke="#333" stroke-width="0.95"/></svg>
<div class="a" style="left:41.5px;top:531.5px;width:318.5px;height:28.0px;border:1px solid #474747"></div>
<div class="a" style="left:52.5px;top:530.5px;width:106.5px;height:3px;background:#535353;"></div>
<div class="t" style="left:55.90px;top:528.00px;font-size:9.3px;color:#dadada;font-weight:normal;font-family:'Liberation Sans',sans-serif;letter-spacing:-0.127px;">Исходное пространство</div>
<div class="t" style="left:55.90px;top:544.00px;font-size:9.3px;color:#dadada;font-weight:normal;font-family:'Liberation Sans',sans-serif;letter-spacing:-0.248px;">Профиль:</div>
<div class="t" style="left:104.50px;top:544.00px;font-size:9.3px;color:#dadada;font-weight:normal;font-family:'Liberation Sans',sans-serif;letter-spacing:-0.361px;">sRGB IEC61966-2.1</div>
<div class="a" style="left:41.5px;top:571.5px;width:318.5px;height:30.5px;border:1px solid #474747"></div>
<div class="a" style="left:52.5px;top:570.5px;width:102px;height:3px;background:#535353;"></div>
<div class="t" style="left:55.90px;top:568.00px;font-size:9.3px;color:#dadada;font-weight:normal;font-family:'Liberation Sans',sans-serif;letter-spacing:-0.148px;">Целевое пространство</div>
<div class="t" style="left:55.90px;top:586.00px;font-size:9.3px;color:#dadada;font-weight:normal;font-family:'Liberation Sans',sans-serif;letter-spacing:-0.248px;">Профиль:</div>
<div class="a" style="left:55.9px;top:593.4px;width:5.5px;height:0.9px;background:#dadada;"></div>
<div class="a" style="left:100.2px;top:582.8px;width:251.3px;height:15.200000000000045px;background:#474747;border-radius:2px;box-shadow:inset 0 0 0 1px #4b4b4b"></div>
<div class="t" style="left:107.00px;top:587.00px;font-size:9.3px;color:#e8e8e8;font-weight:normal;font-family:'Liberation Sans',sans-serif;letter-spacing:-0.231px;">Coated FOGRA39 (ISO 12647-2:2004)</div>
<svg class="a" style="left:342.0px;top:588.9px;" width="6" height="4" viewBox="0 0 6 4"><path d="M0.5 0.5L3 3L5.5 0.5" fill="none" stroke="#bdbdbd" stroke-width="1"/></svg>
<div class="a" style="left:41.5px;top:616px;width:318.5px;height:110.5px;border:1px solid #474747"></div>
<div class="a" style="left:52.5px;top:615px;width:125px;height:3px;background:#535353;"></div>
<div class="t" style="left:55.90px;top:613.00px;font-size:9.3px;color:#dadada;font-weight:normal;font-family:'Liberation Sans',sans-serif;letter-spacing:-0.174px;">Параметры преобразования</div>
<div class="t" style="left:62.00px;top:630.00px;font-size:9.3px;color:#dadada;font-weight:normal;font-family:'Liberation Sans',sans-serif;letter-spacing:-0.354px;">Модуль:</div>
<div class="a" style="left:62px;top:637.6px;width:7px;height:0.9px;background:#dadada;"></div>
<div class="a" style="left:100.2px;top:626.7px;width:251.3px;height:15.099999999999909px;background:#474747;border-radius:2px;box-shadow:inset 0 0 0 1px #4b4b4b"></div>
<div class="t" style="left:107.00px;top:631.00px;font-size:9.3px;color:#e8e8e8;font-weight:normal;font-family:'Liberation Sans',sans-serif;letter-spacing:-0.378px;">Adobe (ACE)</div>
<svg class="a" style="left:342.0px;top:632.75px;" width="6" height="4" viewBox="0 0 6 4"><path d="M0.5 0.5L3 3L5.5 0.5" fill="none" stroke="#bdbdbd" stroke-width="1"/></svg>
<div class="t" style="left:66.70px;top:651.00px;font-size:9.3px;color:#dadada;font-weight:normal;font-family:'Liberation Sans',sans-serif;letter-spacing:-0.231px;">Метод:</div>
<div class="a" style="left:77.5px;top:658.8px;width:5.5px;height:0.9px;background:#dadada;"></div>
<div class="a" style="left:100.2px;top:648.4px;width:251.3px;height:14.399999999999977px;background:#474747;border-radius:2px;box-shadow:inset 0 0 0 1px #4b4b4b"></div>
<div class="t" style="left:107.00px;top:652.00px;font-size:9.3px;color:#e8e8e8;font-weight:normal;font-family:'Liberation Sans',sans-serif;letter-spacing:-0.079px;">Относительный колориметрический</div>
<svg class="a" style="left:342.0px;top:654.0999999999999px;" width="6" height="4" viewBox="0 0 6 4"><path d="M0.5 0.5L3 3L5.5 0.5" fill="none" stroke="#bdbdbd" stroke-width="1"/></svg>
<div class="a" style="left:47.6px;top:669.5px;width:9.2px;height:9.2px;background:#e6e6e6;border-radius:2px"></div>
<svg class="a" style="left:47.6px;top:669.5px;" width="9.2" height="9.2" viewBox="0 0 9.2 9.2"><path d="M2.1 4.7L3.9 6.5L7.3 2.7" fill="none" stroke="#333" stroke-width="1.4"/></svg>
<div class="t" style="left:61.70px;top:670.00px;font-size:9.3px;color:#dadada;font-weight:normal;font-family:'Liberation Sans',sans-serif;letter-spacing:-0.076px;">Использовать компенсацию точки черного</div>
<div class="a" style="left:207.3px;top:678.2px;width:5.7px;height:0.9px;background:#dadada;"></div>
<div class="a" style="left:47.6px;top:689.2px;width:9.2px;height:9.2px;background:#e6e6e6;border-radius:2px"></div>
<svg class="a" style="left:47.6px;top:689.2px;" width="9.2" height="9.2" viewBox="0 0 9.2 9.2"><path d="M2.1 4.7L3.9 6.5L7.3 2.7" fill="none" stroke="#333" stroke-width="1.4"/></svg>
<div class="t" style="left:61.70px;top:690.00px;font-size:9.3px;color:#dadada;font-weight:normal;font-family:'Liberation Sans',sans-serif;letter-spacing:0.013px;">Дизеринг</div>
<div class="a" style="left:61.5px;top:697.9px;width:6px;height:0.9px;background:#dadada;"></div>
<div class="a" style="left:47.6px;top:708.4px;width:9.2px;height:9.2px;background:#e6e6e6;border-radius:2px"></div>
<svg class="a" style="left:47.6px;top:708.4px;" width="9.2" height="9.2" viewBox="0 0 9.2 9.2"><path d="M2.1 4.7L3.9 6.5L7.3 2.7" fill="none" stroke="#333" stroke-width="1.4"/></svg>
<div class="t" style="left:61.70px;top:709.00px;font-size:9.3px;color:#dadada;font-weight:normal;font-family:'Liberation Sans',sans-serif;letter-spacing:-0.150px;">Выполнить сведение для сохранения внешнего вида изображения</div>
<div class="a" style="left:61.5px;top:716.8px;width:5.5px;height:0.9px;background:#dadada;"></div>
<div class="a" style="left:370.6px;top:531px;width:83.2px;height:18.7px;border:1.3px solid #d0d0d0;border-radius:10px"></div>
<div class="t" style="left:406.70px;top:537.00px;font-size:9.3px;color:#f0f0f0;font-weight:normal;font-family:'Liberation Sans',sans-serif;">OK</div>
<div class="a" style="left:370.6px;top:556px;width:83.2px;height:18.6px;border:1px solid #6c6c6c;border-radius:10px"></div>
<div class="t" style="left:396.10px;top:562.00px;font-size:9.3px;color:#e4e4e4;font-weight:normal;font-family:'Liberation Sans',sans-serif;letter-spacing:-0.297px;">Отмена</div>
<div class="a" style="left:370.6px;top:582.6px;width:9.2px;height:9.2px;background:#e6e6e6;border-radius:2px"></div>
<svg class="a" style="left:370.6px;top:582.6px;" width="9.2" height="9.2" viewBox="0 0 9.2 9.2"><path d="M2.1 4.7L3.9 6.5L7.3 2.7" fill="none" stroke="#333" stroke-width="1.4"/></svg>
<div class="t" style="left:384.40px;top:583.00px;font-size:9.3px;color:#dadada;font-weight:normal;font-family:'Liberation Sans',sans-serif;letter-spacing:-0.208px;">Просмотр</div>
<div class="a" style="left:389.9px;top:590.9px;width:5.8px;height:0.9px;background:#dadada;"></div>
<div class="a" style="left:370.6px;top:625.7px;width:83.2px;height:18.5px;border:1px solid #6c6c6c;border-radius:10px"></div>
<div class="t" style="left:380.00px;top:631.00px;font-size:9.3px;color:#e4e4e4;font-weight:normal;font-family:'Liberation Sans',sans-serif;letter-spacing:-0.122px;">Дополнительно</div>
</body></html>
